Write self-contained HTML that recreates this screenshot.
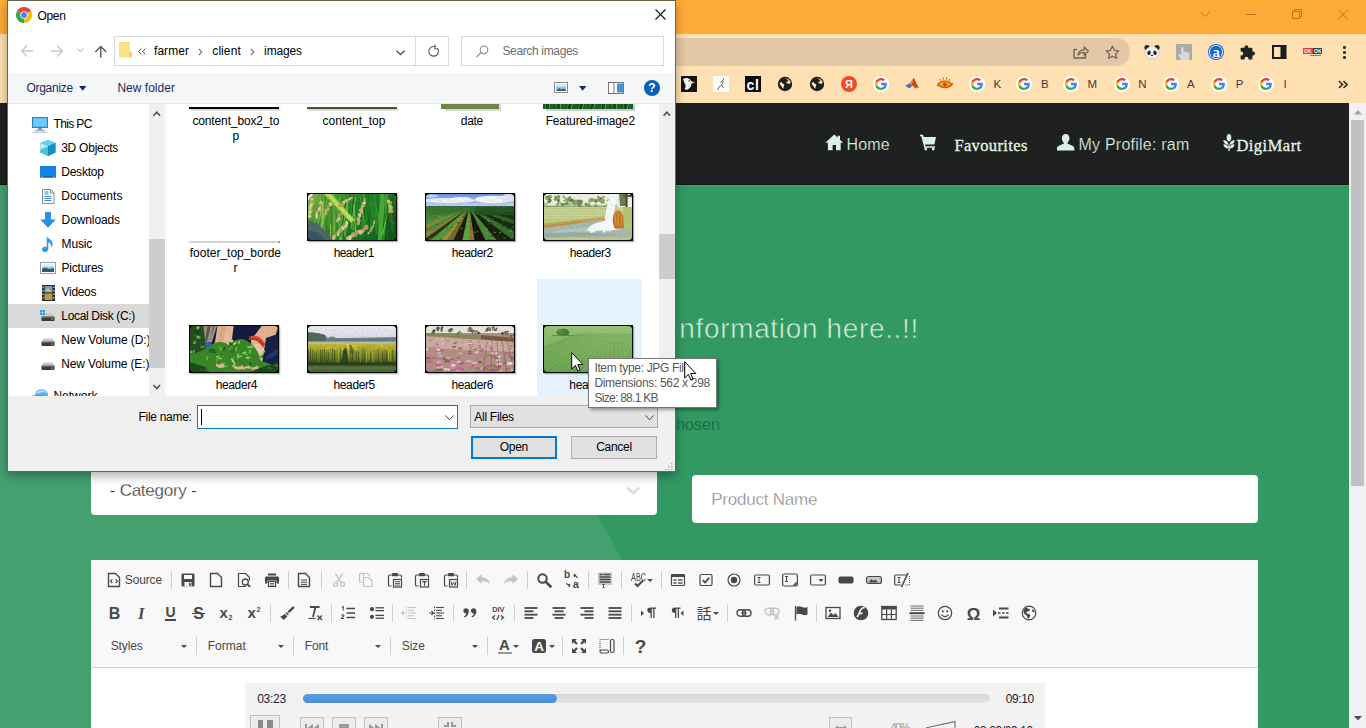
<!DOCTYPE html>
<html><head><meta charset="utf-8"><title>Open</title>
<style>
*{box-sizing:border-box;margin:0;padding:0}
html,body{width:1366px;height:728px;overflow:hidden;background:#329962;font-family:"Liberation Sans",sans-serif}
.abs,.abs *{position:absolute}
#root{position:absolute;left:0;top:0;width:1366px;height:728px;overflow:hidden}
#root div,#root span,#root svg{position:absolute}
.t{white-space:nowrap;line-height:1;}
.seg{font-family:"Liberation Sans",sans-serif;font-size:12px;color:#000}
</style></head><body><div id="root">

<div style="left:0px;top:0px;width:1366px;height:34px;background:#FFAB37;"></div>
<div style="left:0px;top:34px;width:1366px;height:69px;background:#FFE0B2;"></div>
<svg style="left:0px;top:0px;" width="1366" height="34" viewBox="0 0 1366 34"><g fill="none" stroke="#b9741f" stroke-width="1"><path d="M1200 11.5l5 5 5-5"/><path d="M1246 14.500h10"/><path d="M1292.500 11.500h7v7h-7zM1294.500 11.500v-2h7v7h-2"/><path d="M1338 9.500l10 10M1348 9.500l-10 10"/></g></svg>
<div style="left:640px;top:38px;width:490px;height:28px;background:#E4C7A4;border-radius:14px;"></div>
<svg style="left:0px;top:0px;" width="1366" height="103" viewBox="0 0 1366 103"><g fill="none" stroke="#6f6353" stroke-width="1.3" stroke-linejoin="round" stroke-linecap="round"><path d="M1076.500 49.500h-2.500v8.500h11.500v-3.500"/><path d="M1078 55c.5-3.500 3-5.200 6.200-5.200v-2.800l4 4-4 4v-2.700c-2.700 0-4.600.700-6.200 2.700z"/><path d="M1112.500 46.300l1.900 4 4.400.6-3.200 3 .8 4.400-3.900-2.100-3.900 2.100.8-4.400-3.200-3 4.400-.6z"/></g></svg>
<svg style="left:1144px;top:44px;" width="16" height="16" viewBox="0 0 16 16"><circle cx="3" cy="3.500" r="2.600" fill="#222"/><circle cx="13" cy="3.500" r="2.600" fill="#222"/><ellipse cx="8" cy="8.800" rx="7" ry="6.400" fill="#f4f4f4" stroke="#999" stroke-width=".4"/><ellipse cx="5" cy="8.800" rx="1.700" ry="2.200" fill="#222" transform="rotate(20 5 8.800)"/><ellipse cx="11" cy="8.800" rx="1.700" ry="2.200" fill="#222" transform="rotate(-20 11 8.800)"/><ellipse cx="8" cy="11.500" rx="1.100" ry=".8" fill="#222"/></svg>
<svg style="left:1176px;top:44px;" width="16" height="16" viewBox="0 0 16 16"><rect width="16" height="16" fill="#a9aaab"/><path d="M5.500 16.500c-1.500-2.500-2.500-4-3.300-6 .8-1 2-.6 3 .8v-7.300c0-1.600 2.400-1.600 2.400 0v3.700c.7-.5 1.700-.3 2.100.4.700-.4 1.600-.1 1.900.6.900-.3 1.800.3 1.800 1.300v3.500c0 1.200-.4 2-.9 3z" fill="#d8d8d8"/></svg>
<svg style="left:1208px;top:44px;" width="16" height="16" viewBox="0 0 16 16"><circle cx="8" cy="8" r="8" fill="#1a66d6"/><circle cx="8" cy="8" r="6.600" fill="none" stroke="#fff" stroke-width=".9"/></svg>
<span class="t" style="left:1212.70px;top:46.00px;font-size:14px;color:#fff;font-family:'Liberation Serif',serif;font-weight:bold;">a</span>
<svg style="left:1240px;top:43.5px;" width="16" height="16" viewBox="0 0 16 16"><path d="M6.200 1.200c1.200 0 2 .8 2 1.800v.7h3.300c.5 0 .9.400.9.900v3h.7c1.100 0 1.900.8 1.900 1.900s-.8 1.900-1.900 1.900h-.7v3.100c0 .5-.4.900-.9.900h-3.100v-.8c0-1-.8-1.800-1.900-1.800s-1.900.8-1.900 1.800v.8h-3.100c-.5 0-.9-.4-.9-.9v-3.100h.8c1 0 1.800-.8 1.800-1.900s-.8-1.900-1.800-1.900h-.8v-3c0-.5.400-.9.900-.9h3.100v-.7c0-1 .8-1.800 1.600-1.800z" fill="#222"/></svg>
<svg style="left:1272px;top:45px;" width="15" height="14" viewBox="0 0 15 14"><rect x="1" y="1" width="12.500" height="12" fill="none" stroke="#1c1c1c" stroke-width="2"/><rect x="8.500" y="1" width="5" height="12" fill="#1c1c1c"/></svg>
<div style="left:1303px;top:48px;width:10px;height:6px;background:#e53a2b;"></div>
<div style="left:1313px;top:48px;width:9px;height:6px;background:#3b3b3b;"></div>
<span class="t" style="left:1304.00px;top:49.00px;font-size:5px;color:#fff;font-family:'Liberation Sans',sans-serif;font-weight:bold;">OK</span>
<span class="t" style="left:1314.00px;top:49.00px;font-size:5px;color:#fff;font-family:'Liberation Sans',sans-serif;font-weight:bold;">OK</span>
<div style="left:1310px;top:55px;width:11px;height:1px;background:#e0584a;"></div>
<div style="left:1343.2px;top:46.2px;width:2.6px;height:2.6px;background:#2a2a2a;border-radius:50%;"></div>
<div style="left:1343.2px;top:51.2px;width:2.6px;height:2.6px;background:#2a2a2a;border-radius:50%;"></div>
<div style="left:1343.2px;top:56.2px;width:2.6px;height:2.6px;background:#2a2a2a;border-radius:50%;"></div>
<svg style="left:681px;top:76px;" width="16" height="16" viewBox="0 0 16 16"><rect width="16" height="16" fill="#141414"/><path d="M2 3c3-2 7-1 8 2l4 1.500-3.500 1c0 3-2 5.500-5 6.500l-2-1c1.500-2 1.500-4 0-6z" fill="#f3f3f3"/><path d="M10.500 6l3.500 .6-3 1z" fill="#f0a020"/><circle cx="8" cy="5" r=".7" fill="#111"/></svg>
<svg style="left:713px;top:76px;" width="16" height="16" viewBox="0 0 16 16"><rect width="16" height="16" fill="#fbfbfb"/><path d="M10 2c1 1 .5 2-.5 2.500 1 1.500.5 3-1 4.500l2 3M8.500 9l-2.500 2 -1.500 3M9.500 4.500l-2 2.500" fill="none" stroke="#555" stroke-width=".9"/></svg>
<div style="left:745px;top:76px;width:16px;height:16px;background:#0c0c0c;"></div>
<span class="t" style="left:746.50px;top:78.00px;font-size:14px;color:#fff;font-family:'Liberation Sans',sans-serif;font-weight:bold;letter-spacing:0.662px;">cl</span>
<svg style="left:777px;top:76px;" width="16" height="16" viewBox="0 0 16 16"><circle cx="8" cy="8" r="7.2" fill="#1f1f1f"/><path d="M3 6.2c1.2-.2 2 .3 2.6 1.1.5.7 1.6.6 1.8 1.5.2.8-.7 1.3-.8 2.1 0 .6-.4 1.6-1 1.5-.6-.1-.5-1.3-.9-1.9-.5-.7-1.5-.9-1.7-1.8-.2-.8-.3-1.700 0-2.500z" fill="#FFDEB0"/><path d="M8.300 2.2c.9.300 1.100 1.200 2 1.400.8.200 1.200.9.900 1.500-.3.700-1.300.4-1.800 1-.4.500.2 1.200.9 1.300.9.100 1.500.700 2.200.400.600-.3 1-.9 1.200-1.300-.2-2-2.300-4-5.400-4.300z" fill="#FFDEB0"/></svg>
<svg style="left:809px;top:76px;" width="16" height="16" viewBox="0 0 16 16"><circle cx="8" cy="8" r="7.2" fill="#1f1f1f"/><path d="M3 6.2c1.2-.2 2 .3 2.6 1.1.5.7 1.6.6 1.8 1.5.2.8-.7 1.3-.8 2.1 0 .6-.4 1.6-1 1.5-.6-.1-.5-1.3-.9-1.9-.5-.7-1.5-.9-1.7-1.8-.2-.8-.3-1.700 0-2.500z" fill="#FFDEB0"/><path d="M8.300 2.2c.9.300 1.100 1.200 2 1.400.8.200 1.200.9.900 1.500-.3.700-1.300.4-1.800 1-.4.500.2 1.200.9 1.300.9.100 1.500.700 2.200.400.600-.3 1-.9 1.200-1.300-.2-2-2.300-4-5.400-4.300z" fill="#FFDEB0"/></svg>
<div style="left:841px;top:76px;width:16px;height:16px;background:#f04b23;border-radius:50%;"></div>
<span class="t" style="left:845.05px;top:79.00px;font-size:11px;color:#fff;font-family:'Liberation Sans',sans-serif;font-weight:bold;">Я</span>
<svg style="left:873px;top:76px;" width="16" height="16" viewBox="0 0 16 16"><circle cx="8" cy="8" r="8" fill="#fff"/><g transform="translate(8 8) scale(1.27) translate(-8 -8)"><path d="M12.6 8.1c0-.35-.03-.68-.09-1H8v1.9h2.6c-.11.6-.45 1.1-.96 1.45v1.2h1.55c.9-.84 1.42-2.07 1.42-3.55z" fill="#4285F4"/><path d="M8 12.8c1.3 0 2.38-.43 3.18-1.16l-1.55-1.2c-.43.29-.98.46-1.63.46-1.25 0-2.31-.85-2.69-1.98H3.7v1.24C4.5 11.75 6.12 12.8 8 12.8z" fill="#34A853"/><path d="M5.31 8.92A2.9 2.9 0 0 1 5.16 8c0-.32.06-.63.15-.92V5.84H3.7A4.8 4.8 0 0 0 3.2 8c0 .78.19 1.51.51 2.16l1.6-1.24z" fill="#FBBC05"/><path d="M8 5.1c.7 0 1.34.24 1.84.72l1.38-1.38C10.38 3.66 9.3 3.2 8 3.2 6.12 3.2 4.5 4.25 3.7 5.84l1.61 1.24C5.69 5.95 6.75 5.1 8 5.1z" fill="#EA4335"/></g></svg>
<svg style="left:904.5px;top:76px;" width="16" height="16" viewBox="0 0 16 16"><path d="M.3 9.800l4.200-2.600 3 2.600-3.200 2.700z" fill="#3f7ac8"/><path d="M4.500 7.500c2-1.500 3-4.500 4.300-5.800 1.200 1.800 2.200 6.300 5.700 10.300-2-.8-3-.4-4 1-.8-1.800-2.200-3-4-3.700z" fill="#c8461e"/><path d="M8.800 1.700c-1.300 1.300-2.300 4.300-4.300 5.800l2 1.800c1.200-2.200 1.700-5.400 2.300-7.600z" fill="#e88a2a"/></svg>
<svg style="left:936.5px;top:75px;" width="16" height="16" viewBox="0 0 16 16"><path d="M1 9.500c3.500-4.500 10.500-4.500 14 0-3.500 4-10.500 4-14 0z" fill="#f6a623" stroke="#d8580f" stroke-width="1.300"/><circle cx="8" cy="9.500" r="2" fill="#d8400f"/><path d="M1 9.500l-1 2M15 9.500l1-1.500" stroke="#d8580f" stroke-width="1.100"/><path d="M3 4l1.200 1.800M6 2.500l.6 2M10 2.500l-.6 2M13 4l-1.200 1.800" stroke="#d8640f" stroke-width="1.100" fill="none"/></svg>
<svg style="left:969px;top:76px;" width="16" height="16" viewBox="0 0 16 16"><circle cx="8" cy="8" r="8" fill="#fff"/><g transform="translate(8 8) scale(1.27) translate(-8 -8)"><path d="M12.6 8.1c0-.35-.03-.68-.09-1H8v1.9h2.6c-.11.6-.45 1.1-.96 1.45v1.2h1.55c.9-.84 1.42-2.07 1.42-3.55z" fill="#4285F4"/><path d="M8 12.8c1.3 0 2.38-.43 3.18-1.16l-1.55-1.2c-.43.29-.98.46-1.63.46-1.25 0-2.31-.85-2.69-1.98H3.7v1.24C4.5 11.75 6.12 12.8 8 12.8z" fill="#34A853"/><path d="M5.31 8.92A2.9 2.9 0 0 1 5.16 8c0-.32.06-.63.15-.92V5.84H3.7A4.8 4.8 0 0 0 3.2 8c0 .78.19 1.51.51 2.16l1.6-1.24z" fill="#FBBC05"/><path d="M8 5.1c.7 0 1.34.24 1.84.72l1.38-1.38C10.38 3.66 9.3 3.2 8 3.2 6.12 3.2 4.5 4.25 3.7 5.84l1.61 1.24C5.69 5.95 6.75 5.1 8 5.1z" fill="#EA4335"/></g></svg>
<span class="t" style="left:993.60px;top:79.00px;font-size:11.5px;color:#3c3c3c;font-family:'Liberation Sans',sans-serif;">K</span>
<svg style="left:1015.6px;top:76px;" width="16" height="16" viewBox="0 0 16 16"><circle cx="8" cy="8" r="8" fill="#fff"/><g transform="translate(8 8) scale(1.27) translate(-8 -8)"><path d="M12.6 8.1c0-.35-.03-.68-.09-1H8v1.9h2.6c-.11.6-.45 1.1-.96 1.45v1.2h1.55c.9-.84 1.42-2.07 1.42-3.55z" fill="#4285F4"/><path d="M8 12.8c1.3 0 2.38-.43 3.18-1.16l-1.55-1.2c-.43.29-.98.46-1.63.46-1.25 0-2.31-.85-2.69-1.98H3.7v1.24C4.5 11.75 6.12 12.8 8 12.8z" fill="#34A853"/><path d="M5.31 8.92A2.9 2.9 0 0 1 5.16 8c0-.32.06-.63.15-.92V5.84H3.7A4.8 4.8 0 0 0 3.2 8c0 .78.19 1.51.51 2.16l1.6-1.24z" fill="#FBBC05"/><path d="M8 5.1c.7 0 1.34.24 1.84.72l1.38-1.38C10.38 3.66 9.3 3.2 8 3.2 6.12 3.2 4.5 4.25 3.7 5.84l1.61 1.24C5.69 5.95 6.75 5.1 8 5.1z" fill="#EA4335"/></g></svg>
<span class="t" style="left:1041.00px;top:79.00px;font-size:11.5px;color:#3c3c3c;font-family:'Liberation Sans',sans-serif;">B</span>
<svg style="left:1062.7px;top:76px;" width="16" height="16" viewBox="0 0 16 16"><circle cx="8" cy="8" r="8" fill="#fff"/><g transform="translate(8 8) scale(1.27) translate(-8 -8)"><path d="M12.6 8.1c0-.35-.03-.68-.09-1H8v1.9h2.6c-.11.6-.45 1.1-.96 1.45v1.2h1.55c.9-.84 1.42-2.07 1.42-3.55z" fill="#4285F4"/><path d="M8 12.8c1.3 0 2.38-.43 3.18-1.16l-1.55-1.2c-.43.29-.98.46-1.63.46-1.25 0-2.31-.85-2.69-1.98H3.7v1.24C4.5 11.75 6.12 12.8 8 12.8z" fill="#34A853"/><path d="M5.31 8.92A2.9 2.9 0 0 1 5.16 8c0-.32.06-.63.15-.92V5.84H3.7A4.8 4.8 0 0 0 3.2 8c0 .78.19 1.51.51 2.16l1.6-1.24z" fill="#FBBC05"/><path d="M8 5.1c.7 0 1.34.24 1.84.72l1.38-1.38C10.38 3.66 9.3 3.2 8 3.2 6.12 3.2 4.5 4.25 3.7 5.84l1.61 1.24C5.69 5.95 6.75 5.1 8 5.1z" fill="#EA4335"/></g></svg>
<span class="t" style="left:1087.60px;top:79.00px;font-size:11.5px;color:#3c3c3c;font-family:'Liberation Sans',sans-serif;">M</span>
<svg style="left:1113.7px;top:76px;" width="16" height="16" viewBox="0 0 16 16"><circle cx="8" cy="8" r="8" fill="#fff"/><g transform="translate(8 8) scale(1.27) translate(-8 -8)"><path d="M12.6 8.1c0-.35-.03-.68-.09-1H8v1.9h2.6c-.11.6-.45 1.1-.96 1.45v1.2h1.55c.9-.84 1.42-2.07 1.42-3.55z" fill="#4285F4"/><path d="M8 12.8c1.3 0 2.38-.43 3.18-1.16l-1.55-1.2c-.43.29-.98.46-1.63.46-1.25 0-2.31-.85-2.69-1.98H3.7v1.24C4.5 11.75 6.12 12.8 8 12.8z" fill="#34A853"/><path d="M5.31 8.92A2.9 2.9 0 0 1 5.16 8c0-.32.06-.63.15-.92V5.84H3.7A4.8 4.8 0 0 0 3.2 8c0 .78.19 1.51.51 2.16l1.6-1.24z" fill="#FBBC05"/><path d="M8 5.1c.7 0 1.34.24 1.84.72l1.38-1.38C10.38 3.66 9.3 3.2 8 3.2 6.12 3.2 4.5 4.25 3.7 5.84l1.61 1.24C5.69 5.95 6.75 5.1 8 5.1z" fill="#EA4335"/></g></svg>
<span class="t" style="left:1138.30px;top:79.00px;font-size:11.5px;color:#3c3c3c;font-family:'Liberation Sans',sans-serif;">N</span>
<svg style="left:1163px;top:76px;" width="16" height="16" viewBox="0 0 16 16"><circle cx="8" cy="8" r="8" fill="#fff"/><g transform="translate(8 8) scale(1.27) translate(-8 -8)"><path d="M12.6 8.1c0-.35-.03-.68-.09-1H8v1.9h2.6c-.11.6-.45 1.1-.96 1.45v1.2h1.55c.9-.84 1.42-2.07 1.42-3.55z" fill="#4285F4"/><path d="M8 12.8c1.3 0 2.38-.43 3.18-1.16l-1.55-1.2c-.43.29-.98.46-1.63.46-1.25 0-2.31-.85-2.69-1.98H3.7v1.24C4.5 11.75 6.12 12.8 8 12.8z" fill="#34A853"/><path d="M5.31 8.92A2.9 2.9 0 0 1 5.16 8c0-.32.06-.63.15-.92V5.84H3.7A4.8 4.8 0 0 0 3.2 8c0 .78.19 1.51.51 2.16l1.6-1.24z" fill="#FBBC05"/><path d="M8 5.1c.7 0 1.34.24 1.84.72l1.38-1.38C10.38 3.66 9.3 3.2 8 3.2 6.12 3.2 4.5 4.25 3.7 5.84l1.61 1.24C5.69 5.95 6.75 5.1 8 5.1z" fill="#EA4335"/></g></svg>
<span class="t" style="left:1187.00px;top:79.00px;font-size:11.5px;color:#3c3c3c;font-family:'Liberation Sans',sans-serif;">A</span>
<svg style="left:1211px;top:76px;" width="16" height="16" viewBox="0 0 16 16"><circle cx="8" cy="8" r="8" fill="#fff"/><g transform="translate(8 8) scale(1.27) translate(-8 -8)"><path d="M12.6 8.1c0-.35-.03-.68-.09-1H8v1.9h2.6c-.11.6-.45 1.1-.96 1.45v1.2h1.55c.9-.84 1.42-2.07 1.42-3.55z" fill="#4285F4"/><path d="M8 12.8c1.3 0 2.38-.43 3.18-1.16l-1.55-1.2c-.43.29-.98.46-1.63.46-1.25 0-2.31-.85-2.69-1.98H3.7v1.24C4.5 11.75 6.12 12.8 8 12.8z" fill="#34A853"/><path d="M5.31 8.92A2.9 2.9 0 0 1 5.16 8c0-.32.06-.63.15-.92V5.84H3.7A4.8 4.8 0 0 0 3.2 8c0 .78.19 1.51.51 2.16l1.6-1.24z" fill="#FBBC05"/><path d="M8 5.1c.7 0 1.34.24 1.84.72l1.38-1.38C10.38 3.66 9.3 3.2 8 3.2 6.12 3.2 4.5 4.25 3.7 5.84l1.61 1.24C5.69 5.95 6.75 5.1 8 5.1z" fill="#EA4335"/></g></svg>
<span class="t" style="left:1235.80px;top:79.00px;font-size:11.5px;color:#3c3c3c;font-family:'Liberation Sans',sans-serif;">P</span>
<svg style="left:1258px;top:76px;" width="16" height="16" viewBox="0 0 16 16"><circle cx="8" cy="8" r="8" fill="#fff"/><g transform="translate(8 8) scale(1.27) translate(-8 -8)"><path d="M12.6 8.1c0-.35-.03-.68-.09-1H8v1.9h2.6c-.11.6-.45 1.1-.96 1.45v1.2h1.55c.9-.84 1.42-2.07 1.42-3.55z" fill="#4285F4"/><path d="M8 12.8c1.3 0 2.38-.43 3.18-1.16l-1.55-1.2c-.43.29-.98.46-1.63.46-1.25 0-2.31-.85-2.69-1.98H3.7v1.24C4.5 11.75 6.12 12.8 8 12.8z" fill="#34A853"/><path d="M5.31 8.92A2.9 2.9 0 0 1 5.16 8c0-.32.06-.63.15-.92V5.84H3.7A4.8 4.8 0 0 0 3.2 8c0 .78.19 1.51.51 2.16l1.6-1.24z" fill="#FBBC05"/><path d="M8 5.1c.7 0 1.34.24 1.84.72l1.38-1.38C10.38 3.66 9.3 3.2 8 3.2 6.12 3.2 4.5 4.25 3.7 5.84l1.61 1.24C5.69 5.95 6.75 5.1 8 5.1z" fill="#EA4335"/></g></svg>
<span class="t" style="left:1283.60px;top:79.00px;font-size:11.5px;color:#3c3c3c;font-family:'Liberation Sans',sans-serif;">I</span>
<svg style="left:1338px;top:79.5px;" width="10" height="9" viewBox="0 0 10 9"><path d="M1 1l3.500 3.500-3.500 3.500M5.500 1l3.500 3.500-3.500 3.500" fill="none" stroke="#2a2a2a" stroke-width="1.600"/></svg>
<div style="left:0px;top:103px;width:1349px;height:82px;background:#1f2120;"></div>
<div style="left:0px;top:184px;width:1349px;height:1px;background:#06180f;"></div>
<div style="left:0px;top:185px;width:1349px;height:543px;background:#329962;"></div>
<div style="left:0px;top:185px;width:1349px;height:1px;background:rgba(255,255,255,.12);"></div>
<svg style="left:0px;top:185px;" width="1349" height="543" viewBox="0 0 1349 543"><polygon points="0,0 412.4,0 716.5,543 0,543" fill="#45A070"/></svg>
<svg style="left:825px;top:134px;" width="19" height="17" viewBox="0 0 19 17"><path d="M9.300 0.500l-9 8.200h2.600v7.600h4.700v-5.200h3.400v5.200h4.700v-7.600h2.600l-3.300-3v-4h-2.300v1.900z" fill="#d9f2e3"/></svg>
<span class="t" style="left:846.40px;top:137.00px;font-size:16px;color:#d9f2e3;font-family:'Liberation Sans',sans-serif;letter-spacing:0.230px;-webkit-text-stroke:.2px #1f2120;">Home</span>
<svg style="left:920px;top:134px;" width="17" height="17" viewBox="0 0 17 17"><path d="M0 .8h3l.7 2.300h12.300l-1.600 7.300h-9.400l.5 1.800h9.500v1.500h-10.700l-3-11.400h-1.800z" fill="#d9f2e3"/><circle cx="5.800" cy="15" r="1.400" fill="#d9f2e3"/><circle cx="13.200" cy="15" r="1.400" fill="#d9f2e3"/></svg>
<span class="t" style="left:954.40px;top:138.00px;font-size:16.5px;color:#e4f4e6;font-family:'Liberation Serif',serif;letter-spacing:0.364px;-webkit-text-stroke:.3px #e4f4e6;">Favourites</span>
<svg style="left:1057px;top:134px;" width="18" height="17" viewBox="0 0 18 17"><path d="M8.700 0c2.300 0 3.700 1.900 3.700 4.300 0 1.700-.7 3.300-1.800 4.200v1.200c2.500.9 6.400 2.200 6.700 4.300v2.600h-17.300v-2.600c.3-2.100 4.200-3.400 6.700-4.300v-1.200c-1.100-.9-1.800-2.500-1.800-4.200 0-2.400 1.400-4.300 3.800-4.300z" fill="#d9f2e3"/></svg>
<span class="t" style="left:1078.50px;top:137.00px;font-size:16px;color:#d9f2e3;font-family:'Liberation Sans',sans-serif;letter-spacing:0.229px;-webkit-text-stroke:.2px #1f2120;">My Profile: ram</span>
<svg style="left:1222.5px;top:134px;" width="12" height="17" viewBox="0 0 12 17"><g fill="#d9f2e3"><ellipse cx="6" cy="3.600" rx="2.300" ry="3.600"/><path d="M.2 6.300c2.600-.5 5 1.300 5.500 4.500-2.800.2-5-1.500-5.500-4.500z"/><path d="M11.800 6.300c-2.600-.5-5 1.300-5.500 4.500 2.800.2 5-1.500 5.500-4.500z"/><path d="M.4 10.400c2.500-.4 4.700 1 5.300 3.900-2.700.2-4.800-1.200-5.300-3.900z"/><path d="M11.600 10.400c-2.500-.4-4.700 1-5.300 3.900 2.700.2 4.800-1.200 5.300-3.900z"/><rect x="5.300" y="11" width="1.400" height="6"/></g></svg>
<span class="t" style="left:1236.40px;top:138.00px;font-size:16.5px;color:#e4f4e6;font-family:'Liberation Serif',serif;letter-spacing:0.487px;-webkit-text-stroke:.3px #e4f4e6;">DigiMart</span>
<div style="left:677px;top:300px;width:300px;height:60px;overflow:hidden"><span class="t" style="left:0.00px;top:15.00px;font-size:28px;color:#d6efe0;font-family:'Liberation Sans',sans-serif;letter-spacing:0.650px;left:auto;right:58.1px;-webkit-text-stroke:.6px #329962;">Add product information here..!!</span></div>
<span class="t" style="left:600.00px;top:417.00px;font-size:16px;color:#1c5c3c;font-family:'Liberation Sans',sans-serif;left:auto;right:646.2px;-webkit-text-stroke:.35px #329962;">No file chosen</span>
<div style="left:91px;top:462px;width:566px;height:53px;background:#fff;border-radius:4px;"></div>
<span class="t" style="left:109.80px;top:482.00px;font-size:17px;color:#2e2e36;font-family:'Liberation Sans',sans-serif;letter-spacing:-0.262px;-webkit-text-stroke:.3px #fff;">- Category -</span>
<svg style="left:626px;top:486px;" width="15" height="10" viewBox="0 0 15 10"><path d="M1 1.500l6.300 5.500 6.300-5.500" fill="none" stroke="#dcdcdc" stroke-width="2.600"/></svg>
<div style="left:692px;top:475px;width:566px;height:48px;background:#fff;border-radius:4px;"></div>
<span class="t" style="left:711.20px;top:491.00px;font-size:17px;color:#85858d;font-family:'Liberation Sans',sans-serif;letter-spacing:-0.221px;-webkit-text-stroke:.3px #fff;">Product Name</span>
<div style="left:91px;top:560px;width:1167px;height:168px;background:#fff;"></div>
<div style="left:91px;top:560px;width:1167px;height:108px;background:#f8f8f8;border-bottom:1px solid #d1d1d1;"></div>
<svg style="left:105.5px;top:572.0px;" width="16" height="16" viewBox="0 0 16 16"><path d="M2.5 1.5h7l4 4v9h-11z" fill="none" stroke="#484848" stroke-width="1.400" stroke-linejoin="round"/><path d="M6.300 7.200l-1.700 2 1.700 2M9.700 7.200l1.700 2-1.700 2" fill="none" stroke="#484848" stroke-width="1.200"/></svg>
<span class="t" style="left:124.80px;top:574.00px;font-size:12px;color:#484848;font-family:'Liberation Sans',sans-serif;letter-spacing:-0.137px;">Source</span>
<div style="left:171.0px;top:571px;width:1px;height:18px;background:#cfcfcf;"></div>
<div style="left:288.1px;top:571px;width:1px;height:18px;background:#cfcfcf;"></div>
<div style="left:321.0px;top:571px;width:1px;height:18px;background:#cfcfcf;"></div>
<div style="left:465.9px;top:571px;width:1px;height:18px;background:#cfcfcf;"></div>
<div style="left:527.2px;top:571px;width:1px;height:18px;background:#cfcfcf;"></div>
<div style="left:587.8px;top:571px;width:1px;height:18px;background:#cfcfcf;"></div>
<div style="left:621.0px;top:571px;width:1px;height:18px;background:#cfcfcf;"></div>
<div style="left:660.7px;top:571px;width:1px;height:18px;background:#cfcfcf;"></div>
<svg style="left:180.0px;top:572.0px;" width="16" height="16" viewBox="0 0 16 16"><path d="M1.500 3c0-.8.600-1.500 1.500-1.500h10c.8 0 1.500.7 1.500 1.500v10c0 .8-.7 1.500-1.500 1.500h-10c-.9 0-1.500-.7-1.500-1.500z" fill="#484848"/><rect x="4" y="3" width="8" height="4" fill="#f8f8f8"/><rect x="4.500" y="10" width="7" height="4.500" fill="#f8f8f8"/><rect x="9" y="10.800" width="1.700" height="3" fill="#484848"/></svg>
<svg style="left:207.7px;top:572.0px;" width="16" height="16" viewBox="0 0 16 16"><path d="M2.5 1.5h7l4 4v9h-11z" fill="none" stroke="#484848" stroke-width="1.400" stroke-linejoin="round"/></svg>
<svg style="left:235.8px;top:572.0px;" width="16" height="16" viewBox="0 0 16 16"><path d="M10 14.500h-7.500v-13h7l4 4v3" fill="none" stroke="#484848" stroke-width="1.200" stroke-linejoin="round"/><circle cx="9.300" cy="10" r="3" fill="none" stroke="#484848" stroke-width="1.300"/><path d="M11.500 12.300l2.600 2.600" stroke="#484848" stroke-width="1.800"/></svg>
<svg style="left:264.0px;top:572.0px;" width="16" height="16" viewBox="0 0 16 16"><rect x="4" y="1.500" width="8" height="2" fill="#484848"/><path d="M1 6c0-.8.600-1.500 1.500-1.500h11c.8 0 1.500.7 1.500 1.500v5.500h-2.500v-3h-9v3h-2.500z" fill="#484848"/><rect x="4.500" y="9.500" width="7" height="5" fill="none" stroke="#484848" stroke-width="1.200"/><path d="M6 11.500h4M6 13h4" stroke="#484848" stroke-width=".8"/></svg>
<svg style="left:296.4px;top:572.0px;" width="16" height="16" viewBox="0 0 16 16"><path d="M2.5 1.5h7l4 4v9h-11z" fill="none" stroke="#484848" stroke-width="1.400" stroke-linejoin="round"/><path d="M5 8h6" stroke="#484848" stroke-width="1"/><path d="M5 10.2h6" stroke="#484848" stroke-width="1"/><path d="M5 12.4h6" stroke="#484848" stroke-width="1"/></svg>
<svg style="left:331.0px;top:572.0px;" width="16" height="16" viewBox="0 0 16 16"><path d="M4.500 1.500l5.800 9M11.500 1.500l-5.800 9" stroke="#c4c4c4" stroke-width="1.500" fill="none"/><circle cx="4.500" cy="12.300" r="2" fill="none" stroke="#c4c4c4" stroke-width="1.300"/><circle cx="11.500" cy="12.300" r="2" fill="none" stroke="#c4c4c4" stroke-width="1.300"/></svg>
<svg style="left:357.5px;top:572.0px;" width="16" height="16" viewBox="0 0 16 16"><path d="M5.500 4.500v-3h4l2.500 2.500" fill="none" stroke="#c4c4c4" stroke-width="1.200"/><path d="M1.500 1.500h4" stroke="#c4c4c4" stroke-width="1.200"/><path d="M1.500 1.500v8.500h3" fill="none" stroke="#c4c4c4" stroke-width="1.200"/><path d="M5.500 5.500h5l3.500 3.500v5.500h-8.500z" fill="none" stroke="#c4c4c4" stroke-width="1.200" stroke-linejoin="round"/></svg>
<svg style="left:386.5px;top:572.0px;" width="16" height="16" viewBox="0 0 16 16"><path d="M5 3h-2.200c-.7 0-1.300.6-1.300 1.300v8.400c0 .7.600 1.300 1.300 1.300h1.700" fill="none" stroke="#484848" stroke-width="1.200"/><path d="M11 3h2.200c.7 0 1.300.6 1.300 1.300v2.200" fill="none" stroke="#484848" stroke-width="1.200"/><path d="M5 4.200v-2c0-.7.500-1.200 1.200-1.200h3.600c.7 0 1.200.5 1.200 1.200v2z" fill="#484848"/><rect x="6.500" y="7.500" width="8" height="7.500" fill="none" stroke="#484848" stroke-width="1.200"/><path d="M8 9.7h5" stroke="#484848" stroke-width="0.9"/><path d="M8 11.4h5" stroke="#484848" stroke-width="0.9"/><path d="M8 13.1h5" stroke="#484848" stroke-width="0.9"/></svg>
<svg style="left:414.4px;top:572.0px;" width="16" height="16" viewBox="0 0 16 16"><path d="M5 3h-2.200c-.7 0-1.300.6-1.300 1.300v8.400c0 .7.600 1.300 1.300 1.300h1.700" fill="none" stroke="#484848" stroke-width="1.200"/><path d="M11 3h2.200c.7 0 1.300.6 1.300 1.300v2.200" fill="none" stroke="#484848" stroke-width="1.200"/><path d="M5 4.200v-2c0-.7.500-1.200 1.200-1.200h3.600c.7 0 1.200.5 1.200 1.200v2z" fill="#484848"/><rect x="6.500" y="7.500" width="8" height="7.500" fill="none" stroke="#484848" stroke-width="1.200"/><path d="M8.300 9.700h4.400M10.500 9.700v4" stroke="#484848" stroke-width="1.200" fill="none"/></svg>
<svg style="left:442.5px;top:572.0px;" width="16" height="16" viewBox="0 0 16 16"><path d="M5 3h-2.200c-.7 0-1.300.6-1.300 1.300v8.400c0 .7.600 1.300 1.300 1.300h1.700" fill="none" stroke="#484848" stroke-width="1.200"/><path d="M11 3h2.200c.7 0 1.300.6 1.300 1.300v2.200" fill="none" stroke="#484848" stroke-width="1.200"/><path d="M5 4.200v-2c0-.7.500-1.200 1.200-1.200h3.600c.7 0 1.200.5 1.200 1.200v2z" fill="#484848"/><rect x="6.500" y="7.500" width="8" height="7.500" fill="none" stroke="#484848" stroke-width="1.200"/><path d="M8 9.500l.9 3.800 1.600-3 1.600 3 .9-3.800" stroke="#484848" stroke-width="1" fill="none"/></svg>
<svg style="left:475.2px;top:572.0px;" width="16" height="16" viewBox="0 0 16 16"><path d="M1 7l5.500-4.500v2.800c4.500 0 7.500 2.200 8.500 6.700-2-2.300-4.500-3-8.500-2.800v2.800z" fill="#c4c4c4"/></svg>
<svg style="left:502.8px;top:572.0px;" width="16" height="16" viewBox="0 0 16 16"><path d="M15 7l-5.500-4.500v2.800c-4.500 0-7.500 2.200-8.500 6.700 2-2.300 4.500-3 8.500-2.800v2.800z" fill="#c4c4c4"/></svg>
<svg style="left:536.2px;top:572.0px;" width="16" height="16" viewBox="0 0 16 16"><circle cx="6.500" cy="6.500" r="4.200" fill="none" stroke="#484848" stroke-width="2"/><path d="M9.800 9.800l4.700 4.700" stroke="#484848" stroke-width="2.600" stroke-linecap="round"/></svg>
<svg style="left:563.8px;top:572.0px;" width="16" height="16" viewBox="0 0 16 16"><path d="M9.500 3.500c2 0 3.500.5 4 2.500M12 3.500l-2.200 1.300M12 3.500l-2.200-1.300" fill="none" stroke="#484848" stroke-width="1.100"/><path d="M2.500 11c.3 1.800 1.800 2.300 3.800 2.300M4.200 13.300l1.800-1.300M4.200 13.300l1.800 1.300" fill="none" stroke="#484848" stroke-width="1.100"/></svg>
<svg style="left:596.5px;top:572.0px;" width="16" height="16" viewBox="0 0 16 16"><rect x="1" y=".5" width="14" height="12.500" fill="#c9c9c9"/><path d="M2.5 2.5h3.0" stroke="#484848" stroke-width="1.5"/><path d="M6.5 2.5h7.0" stroke="#484848" stroke-width="1.5"/><path d="M2.5 5h11.0" stroke="#484848" stroke-width="1.5"/><path d="M2.5 7.5h11.0" stroke="#484848" stroke-width="1.5"/><path d="M2.5 10h11.0" stroke="#484848" stroke-width="1.5"/><path d="M6.500 12.500v3M5.300 12.500h2.400M5.300 15.500h2.400" stroke="#484848" stroke-width=".9"/></svg>
<svg style="left:670.3px;top:572.0px;" width="16" height="16" viewBox="0 0 16 16"><rect x="1.500" y="2.500" width="13" height="11" rx="1" fill="none" stroke="#484848" stroke-width="1.200"/><rect x="1.500" y="2.500" width="13" height="2.500" fill="#484848"/><path d="M3.5 8h3.0" stroke="#484848" stroke-width="1.4"/><path d="M8 8h4.5" stroke="#484848" stroke-width="1.4"/><path d="M3.5 11h3.0" stroke="#484848" stroke-width="1.4"/><path d="M8 11h4.5" stroke="#484848" stroke-width="1.4"/></svg>
<svg style="left:698.0px;top:572.0px;" width="16" height="16" viewBox="0 0 16 16"><rect x="2" y="2.500" width="12" height="11" rx="1.500" fill="none" stroke="#484848" stroke-width="1.200"/><path d="M4.800 8.200l2.200 2.300 4.300-4.800" fill="none" stroke="#484848" stroke-width="1.800"/></svg>
<svg style="left:726.0px;top:572.0px;" width="16" height="16" viewBox="0 0 16 16"><circle cx="8" cy="8" r="6" fill="none" stroke="#484848" stroke-width="1.200"/><circle cx="8" cy="8" r="3.200" fill="#484848"/></svg>
<svg style="left:754.0px;top:572.0px;" width="16" height="16" viewBox="0 0 16 16"><rect x=".6" y="3" width="14.800" height="10" rx="1.500" fill="none" stroke="#484848" stroke-width="1.200"/><path d="M3.500 5.500h3M5 5.500v5M3.500 10.500h3" stroke="#484848" stroke-width="1" fill="none"/></svg>
<svg style="left:782.0px;top:572.0px;" width="16" height="16" viewBox="0 0 16 16"><rect x=".6" y="2" width="14.800" height="12" rx="1.500" fill="none" stroke="#484848" stroke-width="1.200"/><path d="M3 4.500h3M4.500 4.500v5M3 9.500h3" stroke="#484848" stroke-width="1" fill="none"/><path d="M14.500 9.500l-4 4h4z" fill="#484848"/></svg>
<svg style="left:810.0px;top:572.0px;" width="16" height="16" viewBox="0 0 16 16"><rect x=".6" y="3" width="14.800" height="10" rx="1.500" fill="none" stroke="#484848" stroke-width="1.200"/><path d="M8.500 7l2.500 3 2.500-3z" fill="#484848"/></svg>
<svg style="left:838.0px;top:572.0px;" width="16" height="16" viewBox="0 0 16 16"><rect x=".5" y="4.500" width="15" height="7" rx="1.800" fill="#484848"/></svg>
<svg style="left:865.8px;top:572.0px;" width="16" height="16" viewBox="0 0 16 16"><rect x=".6" y="4.500" width="14.800" height="7" rx="2" fill="#c8c8c8" stroke="#484848" stroke-width="1.200"/><path d="M2.500 10.500l3-3.500 2 2 1.500-1.500 3.500 3z" fill="#484848"/></svg>
<svg style="left:894.0px;top:572.0px;" width="16" height="16" viewBox="0 0 16 16"><path d="M13 3h-11c-.8 0-1.300.6-1.300 1.300v7.400c0 .7.500 1.300 1.300 1.300h5" fill="none" stroke="#484848" stroke-width="1.200"/><path d="M3.500 5.500h3M5 5.500v5M3.500 10.500h3" stroke="#484848" stroke-width="1" fill="none"/><path d="M14 1l-6.500 14" stroke="#484848" stroke-width="1.600"/><path d="M15.400 4v9h-5" fill="none" stroke="#484848" stroke-width="1" stroke-dasharray="1 1"/></svg>
<span class="t" style="left:564.00px;top:570.00px;font-size:10px;color:#484848;font-family:'Liberation Sans',sans-serif;font-weight:bold;">b</span>
<span class="t" style="left:572.80px;top:579.00px;font-size:11px;color:#484848;font-family:'Liberation Sans',sans-serif;font-weight:bold;">a</span>
<span class="t" style="left:630.80px;top:573.00px;font-size:10px;color:#484848;font-family:'Liberation Sans',sans-serif;transform:scaleX(.74);transform-origin:0 0;">ABC</span>
<svg style="left:630px;top:572px;" width="16" height="16" viewBox="0 0 16 16"><path d="M5 11.500l2.500 2.500 5.500-5.500" fill="none" stroke="#484848" stroke-width="2"/></svg>
<svg style="left:647.3px;top:579px;" width="6" height="3" viewBox="0 0 6 3"><path d="M0 0h6l-3 3z" fill="#484848"/></svg>
<div style="left:270.0px;top:604px;width:1px;height:18px;background:#cfcfcf;"></div>
<div style="left:330.9px;top:604px;width:1px;height:18px;background:#cfcfcf;"></div>
<div style="left:392.1px;top:604px;width:1px;height:18px;background:#cfcfcf;"></div>
<div style="left:453.1px;top:604px;width:1px;height:18px;background:#cfcfcf;"></div>
<div style="left:514.1px;top:604px;width:1px;height:18px;background:#cfcfcf;"></div>
<div style="left:630.9px;top:604px;width:1px;height:18px;background:#cfcfcf;"></div>
<div style="left:727.0px;top:604px;width:1px;height:18px;background:#cfcfcf;"></div>
<div style="left:816.0px;top:604px;width:1px;height:18px;background:#cfcfcf;"></div>
<span class="t" style="left:108.72px;top:606.00px;font-size:16px;color:#484848;font-family:'Liberation Sans',sans-serif;font-weight:bold;">B</span>
<span class="t" style="left:137.99px;top:606.00px;font-size:16.5px;color:#484848;font-family:'Liberation Serif',serif;font-weight:bold;font-style:italic;">I</span>
<span class="t" style="left:165.44px;top:605.00px;font-size:14px;color:#484848;font-family:'Liberation Sans',sans-serif;font-weight:bold;">U</span>
<div style="left:165px;top:619.3px;width:11px;height:1.3px;background:#484848;"></div>
<span class="t" style="left:193.16px;top:606.00px;font-size:16px;color:#484848;font-family:'Liberation Sans',sans-serif;font-weight:bold;">S</span>
<div style="left:192px;top:612.5px;width:13px;height:1.5px;background:#484848;"></div>
<span class="t" style="left:219.50px;top:605.00px;font-size:15px;color:#484848;font-family:'Liberation Sans',sans-serif;font-weight:bold;">x</span>
<span class="t" style="left:228.50px;top:614.00px;font-size:7px;color:#484848;font-family:'Liberation Sans',sans-serif;font-weight:bold;">2</span>
<span class="t" style="left:247.50px;top:605.00px;font-size:15px;color:#484848;font-family:'Liberation Sans',sans-serif;font-weight:bold;">x</span>
<span class="t" style="left:256.50px;top:606.00px;font-size:7px;color:#484848;font-family:'Liberation Sans',sans-serif;font-weight:bold;">2</span>
<svg style="left:278.7px;top:605.0px;" width="16" height="16" viewBox="0 0 16 16"><path d="M15 1.800c.5.500.5 1.200 0 1.700l-4.700 4.600-1.700-1.700 4.700-4.600c.500-.5 1.200-.5 1.700 0z" fill="#484848"/><path d="M7.700 7l2.300 2.300-1.200 1.100-2.200-2.300z" fill="#484848"/><path d="M5.800 8.800l2.600 2.600-3.700 3.600-3.700-3.500c1.800-.2 3.400-1.200 4.800-2.700z" fill="#484848"/></svg>
<svg style="left:307.0px;top:605.0px;" width="16" height="16" viewBox="0 0 16 16"><path d="M3 2h9.500M8.500 2l-2.500 10" stroke="#484848" stroke-width="1.800" fill="none"/><path d="M1.500 13.500h7" stroke="#484848" stroke-width="1.200"/><path d="M10.500 10.500l4.500 4.500M15 10.500l-4.500 4.500" stroke="#484848" stroke-width="1.400"/></svg>
<svg style="left:340.2px;top:605.0px;" width="16" height="16" viewBox="0 0 16 16"><path d="M6.5 3.5h8.5" stroke="#484848" stroke-width="1.5"/><path d="M6.5 8h8.5" stroke="#484848" stroke-width="1.5"/><path d="M6.5 12.5h8.5" stroke="#484848" stroke-width="1.5"/><path d="M2 2.500l1.200-.8v3.800" fill="none" stroke="#484848" stroke-width="1.100"/><path d="M1.500 10.500c.2-1 2.400-1 2.300.200 0 .9-2.300 1.600-2.300 2.800h2.500" fill="none" stroke="#484848" stroke-width="1.100"/></svg>
<svg style="left:368.5px;top:605.0px;" width="16" height="16" viewBox="0 0 16 16"><circle cx="3" cy="4.200" r="2.100" fill="#484848"/><circle cx="3" cy="11.800" r="2.100" fill="#484848"/><path d="M6.5 2.8h8.5" stroke="#484848" stroke-width="1.3"/><path d="M6.5 5.6h8.5" stroke="#484848" stroke-width="1.3"/><path d="M6.5 10.4h8.5" stroke="#484848" stroke-width="1.3"/><path d="M6.5 13.2h8.5" stroke="#484848" stroke-width="1.3"/></svg>
<svg style="left:401.2px;top:605.0px;" width="16" height="16" viewBox="0 0 16 16"><path d="M7 2.5h8" stroke="#c4c4c4" stroke-width="1.1"/><path d="M7 5.3h6" stroke="#c4c4c4" stroke-width="1.1"/><path d="M7 8h8" stroke="#c4c4c4" stroke-width="1.1"/><path d="M7 10.8h6" stroke="#c4c4c4" stroke-width="1.1"/><path d="M7 13.5h8" stroke="#c4c4c4" stroke-width="1.1"/><path d="M5.500 1.500v13" stroke="#c4c4c4" stroke-width="1" stroke-dasharray="1.500 1.500"/><path d="M5 8h-4.500M2.500 6l-2 2 2 2" fill="none" stroke="#c4c4c4" stroke-width="1.100"/></svg>
<svg style="left:429.0px;top:605.0px;" width="16" height="16" viewBox="0 0 16 16"><path d="M7 2.5h8" stroke="#484848" stroke-width="1.1"/><path d="M7 5.3h6" stroke="#484848" stroke-width="1.1"/><path d="M7 8h8" stroke="#484848" stroke-width="1.1"/><path d="M7 10.8h6" stroke="#484848" stroke-width="1.1"/><path d="M7 13.5h8" stroke="#484848" stroke-width="1.1"/><path d="M5.500 1.500v13" stroke="#484848" stroke-width="1" stroke-dasharray="1.500 1.500"/><path d="M0 8h4.500M2.500 6l2 2-2 2" fill="none" stroke="#484848" stroke-width="1.100"/></svg>
<svg style="left:462.0px;top:605.0px;" width="16" height="16" viewBox="0 0 16 16"><path d="M1.300 5.800c0-1.500 1.200-2.600 2.700-2.600s2.800 1.200 2.800 3.100c0 2.700-1.700 5.200-4.400 6.300l-.6-1c1.300-.8 2.200-1.900 2.500-3.200-1.700.2-3-1-3-2.600zM8.900 5.800c0-1.500 1.200-2.600 2.700-2.600s2.800 1.200 2.800 3.100c0 2.700-1.700 5.200-4.400 6.300l-.6-1c1.300-.8 2.200-1.900 2.500-3.200-1.700.2-3-1-3-2.600z" fill="#484848"/></svg>
<svg style="left:490.2px;top:605.0px;" width="16" height="16" viewBox="0 0 16 16"><path d="M5 10.500l-2.500 2 2.500 2M11 10.500l2.500 2-2.500 2M9.200 10l-2.400 5" fill="none" stroke="#484848" stroke-width="1.300"/></svg>
<svg style="left:522.8px;top:605.0px;" width="16" height="16" viewBox="0 0 16 16"><path d="M1.5 3h13.0" stroke="#484848" stroke-width="1.8"/><path d="M1.5 6.3h9.0" stroke="#484848" stroke-width="1.8"/><path d="M1.5 9.7h13.0" stroke="#484848" stroke-width="1.8"/><path d="M1.5 13h9.0" stroke="#484848" stroke-width="1.8"/></svg>
<svg style="left:551.0px;top:605.0px;" width="16" height="16" viewBox="0 0 16 16"><path d="M1.5 3h13.0" stroke="#484848" stroke-width="1.8"/><path d="M3.5 6.3h9.0" stroke="#484848" stroke-width="1.8"/><path d="M1.5 9.7h13.0" stroke="#484848" stroke-width="1.8"/><path d="M3.5 13h9.0" stroke="#484848" stroke-width="1.8"/></svg>
<svg style="left:579.1px;top:605.0px;" width="16" height="16" viewBox="0 0 16 16"><path d="M1.5 3h13.0" stroke="#484848" stroke-width="1.8"/><path d="M5.5 6.3h9.0" stroke="#484848" stroke-width="1.8"/><path d="M1.5 9.7h13.0" stroke="#484848" stroke-width="1.8"/><path d="M5.5 13h9.0" stroke="#484848" stroke-width="1.8"/></svg>
<svg style="left:607.0px;top:605.0px;" width="16" height="16" viewBox="0 0 16 16"><path d="M1.5 3h13.0" stroke="#484848" stroke-width="1.8"/><path d="M1.5 6.3h13.0" stroke="#484848" stroke-width="1.8"/><path d="M1.5 9.7h13.0" stroke="#484848" stroke-width="1.8"/><path d="M1.5 13h13.0" stroke="#484848" stroke-width="1.8"/></svg>
<svg style="left:639.8px;top:605.0px;" width="16" height="16" viewBox="0 0 16 16"><path d="M9 2.500h7v1.300h-1.500v9.200h-1.300v-9.200h-1.400v9.200h-1.300v-5c-2 0-3.200-1.200-3.200-2.800s1.200-2.700 3.200-2.700z" fill="#484848"/><path d="M1 5.500l3 2.800-3 2.800z" fill="#484848"/></svg>
<svg style="left:668.0px;top:605.0px;" width="16" height="16" viewBox="0 0 16 16"><path d="M5.5 2.500h7v1.300h-1.500v9.200h-1.300v-9.200h-1.400v9.200h-1.300v-5c-2 0-3.200-1.200-3.200-2.800s1.200-2.700 3.200-2.700z" fill="#484848"/><path d="M15.500 5.500l-3 2.800 3 2.800z" fill="#484848"/></svg>
<svg style="left:735.9px;top:605.0px;" width="16" height="16" viewBox="0 0 16 16"><rect x="1" y="4.800" width="8.500" height="6.400" rx="3.200" fill="none" stroke="#484848" stroke-width="1.400"/><rect x="6.500" y="4.800" width="8.500" height="6.400" rx="3.200" fill="none" stroke="#484848" stroke-width="1.400"/><path d="M5.500 8h5" stroke="#484848" stroke-width="1.300"/></svg>
<svg style="left:764.3px;top:605.0px;" width="16" height="16" viewBox="0 0 16 16"><g transform="translate(0,-1.500)"><rect x="1" y="4.800" width="8.500" height="6.400" rx="3.200" fill="none" stroke="#c4c4c4" stroke-width="1.400"/><rect x="6.500" y="4.800" width="8.500" height="6.400" rx="3.200" fill="none" stroke="#c4c4c4" stroke-width="1.400"/><path d="M5.500 8h5" stroke="#c4c4c4" stroke-width="1.300"/></g><path d="M10.500 10.500l4 4M14.500 10.500l-4 4" stroke="#c4c4c4" stroke-width="1.400"/></svg>
<svg style="left:792.5px;top:605.0px;" width="16" height="16" viewBox="0 0 16 16"><path d="M2.500 1v14.500" stroke="#484848" stroke-width="1.300"/><path d="M3.500 2c2-1.200 3.500-.8 5.500 0s3.500 1 5.500 0v7.500c-2 1-3.500.8-5.500 0s-3.500-1.200-5.500 0z" fill="#484848"/></svg>
<svg style="left:825.0px;top:605.0px;" width="16" height="16" viewBox="0 0 16 16"><rect x="1" y="2.500" width="14" height="11" fill="none" stroke="#484848" stroke-width="1.300"/><path d="M2.500 12l3.500-4.500 2.500 2.500 2-2 3 4z" fill="#484848"/><circle cx="5" cy="5.800" r="1.200" fill="#484848"/></svg>
<svg style="left:853.2px;top:605.0px;" width="16" height="16" viewBox="0 0 16 16"><circle cx="8" cy="8" r="7.300" fill="#484848"/><path d="M11.800 3.200c-3 .2-3.800 2.300-4.500 4.300h2.200v1.800h-2.800c-.7 1.800-1.500 3-3 3.300v-1.800c1-.4 1.300-1.600 1.900-3.200.9-2.600 2.200-5.800 6.200-6.200z" fill="#f8f8f8"/></svg>
<svg style="left:881.1px;top:605.0px;" width="16" height="16" viewBox="0 0 16 16"><rect x=".8" y="1.500" width="14.400" height="13" fill="none" stroke="#484848" stroke-width="1.300"/><rect x=".8" y="1.500" width="14.400" height="3" fill="#484848"/><path d="M5.600 4.500v10M10.400 4.500v10M.8 9.500h14.400" stroke="#484848" stroke-width="1.200"/></svg>
<svg style="left:909.0px;top:605.0px;" width="16" height="16" viewBox="0 0 16 16"><path d="M1.5 1h13.0" stroke="#484848" stroke-width="0.8"/><path d="M1.5 3.2h13.0" stroke="#484848" stroke-width="0.8"/><path d="M1.5 5.4h13.0" stroke="#484848" stroke-width="0.8"/><path d="M1.5 11h13.0" stroke="#484848" stroke-width="0.8"/><path d="M1.5 13.2h13.0" stroke="#484848" stroke-width="0.8"/><path d="M1.5 15.4h13.0" stroke="#484848" stroke-width="0.8"/><path d="M0.5 8.2h15.0" stroke="#484848" stroke-width="2"/></svg>
<svg style="left:937.0px;top:605.0px;" width="16" height="16" viewBox="0 0 16 16"><circle cx="8" cy="8" r="6.700" fill="none" stroke="#484848" stroke-width="1.200"/><circle cx="5.700" cy="6.300" r="1.100" fill="#484848"/><circle cx="10.300" cy="6.300" r="1.100" fill="#484848"/><path d="M4.300 9.500c1.800 2.700 5.600 2.700 7.400 0" fill="none" stroke="#484848" stroke-width="1.200"/></svg>
<svg style="left:993.3px;top:605.0px;" width="16" height="16" viewBox="0 0 16 16"><path d="M0 4.500l4 3.500-4 3.500z" fill="#484848"/><path d="M6 3.5h9.5" stroke="#484848" stroke-width="2"/><path d="M6 12.5h9.5" stroke="#484848" stroke-width="2"/><path d="M5 8h11" stroke="#484848" stroke-width="1.600" stroke-dasharray="2.500 1.500"/></svg>
<svg style="left:1021.0px;top:605.0px;" width="16" height="16" viewBox="0 0 16 16"><circle cx="8" cy="8" r="6.800" fill="none" stroke="#484848" stroke-width="1.200"/><path d="M5 2.500c1.500.3 1.500 1.300 3 1.500 1 .2 1.500 1 .5 1.800-1 .7-2.500.4-3 1.500-.4.800.5 1.500 1.500 1.500 1.200 0 2.500.7 2.200 2-.3 1-1 1.500-1.200 3-2-.2-1.500-2-2.500-3.200-1-1.100-2.500-1.500-3-3-.4-1.500.5-4 2.500-5.100zM11 4.500c1 0 2.500 1 3 2.500-1 .5-2.500 0-3-1z" fill="#484848"/></svg>
<span class="t" style="left:492.30px;top:606.00px;font-size:7.5px;color:#484848;font-family:'Liberation Sans',sans-serif;font-weight:bold;letter-spacing:-0.167px;">DIV</span>
<span class="t" style="left:696.40px;top:606.00px;font-size:15px;color:#484848;font-family:'Liberation Sans',sans-serif;font-family:'Liberation Sans','Noto Sans CJK JP',sans-serif;">話</span>
<svg style="left:713.3px;top:612px;" width="6" height="3" viewBox="0 0 6 3"><path d="M0 0h6l-3 3z" fill="#484848"/></svg>
<span class="t" style="left:966.68px;top:606.00px;font-size:17px;color:#484848;font-family:'Liberation Sans',sans-serif;font-weight:bold;">Ω</span>
<div style="left:195.8px;top:637px;width:1px;height:18px;background:#cfcfcf;"></div>
<div style="left:293.0px;top:637px;width:1px;height:18px;background:#cfcfcf;"></div>
<div style="left:389.8px;top:637px;width:1px;height:18px;background:#cfcfcf;"></div>
<div style="left:487.0px;top:637px;width:1px;height:18px;background:#cfcfcf;"></div>
<div style="left:562.2px;top:637px;width:1px;height:18px;background:#cfcfcf;"></div>
<div style="left:623.0px;top:637px;width:1px;height:18px;background:#cfcfcf;"></div>
<span class="t" style="left:110.70px;top:640.00px;font-size:12px;color:#484848;font-family:'Liberation Sans',sans-serif;letter-spacing:-0.113px;">Styles</span>
<svg style="left:181.4px;top:645px;" width="6" height="3" viewBox="0 0 6 3"><path d="M0 0h6l-3 3z" fill="#484848"/></svg>
<span class="t" style="left:207.70px;top:640.00px;font-size:12px;color:#484848;font-family:'Liberation Sans',sans-serif;letter-spacing:0.033px;">Format</span>
<svg style="left:278.4px;top:645px;" width="6" height="3" viewBox="0 0 6 3"><path d="M0 0h6l-3 3z" fill="#484848"/></svg>
<span class="t" style="left:304.80px;top:640.00px;font-size:12px;color:#484848;font-family:'Liberation Sans',sans-serif;letter-spacing:-0.128px;">Font</span>
<svg style="left:375.4px;top:645px;" width="6" height="3" viewBox="0 0 6 3"><path d="M0 0h6l-3 3z" fill="#484848"/></svg>
<span class="t" style="left:401.70px;top:640.00px;font-size:12px;color:#484848;font-family:'Liberation Sans',sans-serif;letter-spacing:-0.011px;">Size</span>
<svg style="left:472px;top:645px;" width="6" height="3" viewBox="0 0 6 3"><path d="M0 0h6l-3 3z" fill="#484848"/></svg>
<span class="t" style="left:499.08px;top:637.00px;font-size:15px;color:#484848;font-family:'Liberation Sans',sans-serif;font-weight:bold;">A</span>
<div style="left:497.5px;top:652.3px;width:14px;height:1.5px;background:#9a9a9a;"></div>
<svg style="left:513.3px;top:645px;" width="6" height="3" viewBox="0 0 6 3"><path d="M0 0h6l-3 3z" fill="#484848"/></svg>
<div style="left:532.3px;top:639px;width:13.5px;height:14px;background:#484848;border-radius:2.500px;"></div>
<span class="t" style="left:534.13px;top:640.00px;font-size:13.5px;color:#f8f8f8;font-family:'Liberation Sans',sans-serif;font-weight:bold;">A</span>
<svg style="left:549px;top:645px;" width="6" height="3" viewBox="0 0 6 3"><path d="M0 0h6l-3 3z" fill="#484848"/></svg>
<svg style="left:571.2px;top:638.0px;" width="16" height="16" viewBox="0 0 16 16"><path d="M1 1h5l-1.700 1.700 2.500 2.500-1.600 1.600-2.500-2.500-1.700 1.700zM15 1v5l-1.700-1.700-2.500 2.500-1.600-1.600 2.500-2.500-1.700-1.700zM1 15v-5l1.700 1.700 2.500-2.500 1.600 1.600-2.500 2.500 1.700 1.700zM15 15h-5l1.700-1.700-2.500-2.500 1.600-1.600 2.500 2.500 1.700-1.700z" fill="#484848"/></svg>
<svg style="left:598.9px;top:638.0px;" width="16" height="16" viewBox="0 0 16 16"><path d="M1 12v-10.500h9.500" fill="none" stroke="#484848" stroke-width="1" stroke-dasharray="1 1"/><rect x="11.500" y="1.500" width="3.500" height="13" rx="1.500" fill="none" stroke="#484848" stroke-width="1.200"/><rect x="1" y="12" width="8.500" height="3" rx="1.500" fill="none" stroke="#484848" stroke-width="1.200"/></svg>
<span class="t" style="left:634.70px;top:637.00px;font-size:19px;color:#484848;font-family:'Liberation Sans',sans-serif;font-weight:bold;">?</span>
<div style="left:245px;top:683px;width:800px;height:45px;background:#f2f2f2;"></div>
<span class="t" style="left:257.20px;top:693.00px;font-size:12px;color:#1c1c2c;font-family:'Liberation Sans',sans-serif;letter-spacing:-0.266px;">03:23</span>
<div style="left:302.5px;top:693.5px;width:687.5px;height:9px;background:linear-gradient(#d6d6d6,#e6e6e6);border-radius:4.500px;"></div>
<div style="left:302.5px;top:693.5px;width:254px;height:9px;background:linear-gradient(#5a9ee0,#4a8fd6);border-radius:4.500px;"></div>
<span class="t" style="left:1005.80px;top:693.00px;font-size:12px;color:#1c1c2c;font-family:'Liberation Sans',sans-serif;letter-spacing:-0.406px;">09:10</span>
<div style="left:250px;top:714.5px;width:30px;height:20px;background:#ececec;border:1px solid #c0c0c0;"></div>
<div style="left:257.8px;top:720.3px;width:5.4px;height:10px;background:#8a8a8a;"></div>
<div style="left:267.3px;top:720.3px;width:5.7px;height:10px;background:#8a8a8a;"></div>
<div style="left:300px;top:717px;width:24px;height:20px;background:#ececec;border:1px solid #c0c0c0;"></div>
<div style="left:332px;top:717px;width:24px;height:20px;background:#ececec;border:1px solid #c0c0c0;"></div>
<div style="left:364px;top:717px;width:24px;height:20px;background:#ececec;border:1px solid #c0c0c0;"></div>
<div style="left:438.3px;top:717px;width:24px;height:20px;background:#ececec;border:1px solid #c0c0c0;"></div>
<svg style="left:305px;top:724px;" width="14" height="8" viewBox="0 0 14 8"><path d="M0 0h2v8h-2zM8 0v8l-5.500-4zM14 0v8l-5.500-4z" fill="#9a9a9a"/></svg>
<div style="left:339px;top:724px;width:10px;height:8px;background:#9a9a9a;"></div>
<svg style="left:369px;top:724px;" width="14" height="8" viewBox="0 0 14 8"><path d="M12 0h2v8h-2zM0 0v8l5.500-4zM6 0v8l5.500-4z" fill="#9a9a9a"/></svg>
<svg style="left:444px;top:722px;" width="12" height="6" viewBox="0 0 12 6"><path d="M3 0h2v5h-5v-2h3zM9 0h-2v5h5v-2h-3z" fill="#9a9a9a"/></svg>
<div style="left:829.3px;top:717px;width:23px;height:20px;background:#ececec;border:1px solid #c0c0c0;"></div>
<svg style="left:835px;top:725px;" width="12" height="6" viewBox="0 0 12 6"><path d="M0 3l3-3v2h6v-2l3 3-3 3v-2h-6v2z" fill="#9a9a9a"/></svg>
<span class="t" style="left:890.50px;top:722.00px;font-size:11px;color:#9b9b9b;font-family:'Liberation Sans',sans-serif;letter-spacing:-1.272px;">40%</span>
<svg style="left:925.5px;top:717px;" width="31" height="12" viewBox="0 0 31 12"><path d="M0 10.800l29-6.200v8" fill="none" stroke="#7d7d7d" stroke-width="1.200"/></svg>
<span class="t" style="left:973.80px;top:725.00px;font-size:12px;color:#1c1c2c;font-family:'Liberation Sans',sans-serif;letter-spacing:-0.399px;">03:23/09:10</span>
<div style="left:1349px;top:103px;width:17px;height:625px;background:#f1f1f1;"></div>
<div style="left:1351px;top:120px;width:13px;height:366px;background:#c1c1c1;"></div>
<svg style="left:1353.5px;top:109.5px;" width="8" height="5" viewBox="0 0 8 5"><path d="M0 4.500l4-4.500 4 4.500z" fill="#a3a3a3"/></svg>
<svg style="left:1353.5px;top:716px;" width="8" height="5" viewBox="0 0 8 5"><path d="M0 0l4 4.500 4-4.500z" fill="#505050"/></svg>
<div style="left:7px;top:0px;width:669px;height:472px;background:#fff;box-shadow:0 4px 10px 0px rgba(0,0,0,.32);border:1px solid rgba(0,0,0,.6);border-top:1px solid rgba(60,45,10,.75);"></div>
<div style="left:8px;top:1px;width:667px;height:72px;background:#fff;"></div>
<svg style="left:16px;top:7px;" width="16" height="16" viewBox="0 0 16 16"><circle cx="8" cy="8" r="8" fill="#fff"/><path d="M8 8L1.070 4A8 8 0 0 1 14.930 4z" fill="#EA4335"/><path d="M8 8L14.930 4A8 8 0 0 1 8 16z" fill="#FBBC05"/><path d="M8 8L8 16A8 8 0 0 1 1.070 4z" fill="#34A853"/><circle cx="8" cy="8" r="3.700" fill="#fff"/><circle cx="8" cy="8" r="2.900" fill="#4285F4"/></svg>
<span class="t" style="left:37.40px;top:10.00px;font-size:12px;color:#000;font-family:'Liberation Sans',sans-serif;letter-spacing:-0.314px;">Open</span>
<svg style="left:655px;top:9.3px;" width="11" height="11" viewBox="0 0 11 11"><path d="M.5 .5l10 10M10.500 .5l-10 10" stroke="#111" stroke-width="1.100"/></svg>
<svg style="left:0px;top:0px;" width="120" height="73" viewBox="0 0 120 73"><g fill="none" stroke="#c9c9c9" stroke-width="1.300"><path d="M33 51h-11.500M27 45.500l-5.500 5.500 5.500 5.500"/><path d="M51 51h11.500M57 45.500l5.500 5.500-5.500 5.500"/><path d="M77.500 48.500l3 3 3-3" stroke-width="1.100"/></g><g fill="none" stroke="#5a5a5a" stroke-width="1.400"><path d="M100.800 57.500v-11M95.300 52l5.500-5.500 5.500 5.500"/></g></svg>
<div style="left:114px;top:36px;width:335px;height:30px;background:#fff;border:1px solid #d9d9d9;"></div>
<div style="left:415px;top:37px;width:1px;height:28px;background:#d9d9d9;"></div>
<svg style="left:119px;top:42px;" width="13" height="16" viewBox="0 0 13 16"><path d="M0 0h11v15.500h-11z" fill="#FBE08A"/><path d="M11 9.500h1.800v6h-1.800z" fill="#F3CB5A"/><path d="M0 0h11v1h-11z" fill="#F7D774"/></svg>
<svg style="left:138px;top:47.5px;" width="8" height="7" viewBox="0 0 8 7"><path d="M3.500 .5l-3 3 3 3M7.500 .5l-3 3 3 3" fill="none" stroke="#555" stroke-width="1"/></svg>
<span class="t" style="left:154.00px;top:45.00px;font-size:12px;color:#000;font-family:'Liberation Sans',sans-serif;letter-spacing:0.055px;">farmer</span>
<span class="t" style="left:212.30px;top:45.00px;font-size:12px;color:#000;font-family:'Liberation Sans',sans-serif;letter-spacing:0.081px;">client</span>
<span class="t" style="left:264.10px;top:45.00px;font-size:12px;color:#000;font-family:'Liberation Sans',sans-serif;letter-spacing:-0.131px;">images</span>
<svg style="left:198px;top:48px;" width="5" height="8" viewBox="0 0 5 8"><path d="M.8 .8l3 3.200-3 3.200" fill="none" stroke="#777" stroke-width="1.200"/></svg>
<svg style="left:250px;top:48px;" width="5" height="8" viewBox="0 0 5 8"><path d="M.8 .8l3 3.200-3 3.200" fill="none" stroke="#777" stroke-width="1.200"/></svg>
<svg style="left:395.5px;top:49.5px;" width="9" height="6" viewBox="0 0 9 6"><path d="M.5 .7l4 4 4-4" fill="none" stroke="#444" stroke-width="1.300"/></svg>
<svg style="left:427px;top:44px;" width="13" height="13" viewBox="-1 -1 13 13"><path d="M9.300 3.200a4.800 4.800 0 1 1-3.600-1.700h2.600" fill="none" stroke="#666" stroke-width="1.200"/><path d="M6.800 -0.300v4h3.200" fill="none" stroke="#666" stroke-width="1.100"/></svg>
<div style="left:461px;top:36px;width:203px;height:30px;background:#fff;border:1px solid #d9d9d9;"></div>
<svg style="left:476px;top:44.5px;" width="13" height="13" viewBox="0 0 13 13"><circle cx="8" cy="4.800" r="3.800" fill="none" stroke="#8a8a8a" stroke-width="1.100"/><path d="M5.200 7.500l-4.700 4.700" stroke="#8a8a8a" stroke-width="1.100"/></svg>
<span class="t" style="left:502.40px;top:45.00px;font-size:12px;color:#6d6d6d;font-family:'Liberation Sans',sans-serif;letter-spacing:-0.342px;">Search images</span>
<div style="left:8px;top:73px;width:667px;height:31px;background:#f5f6f7;border-bottom:1px solid #e8e9ea;"></div>
<span class="t" style="left:26.40px;top:82.00px;font-size:12px;color:#1e3287;font-family:'Liberation Sans',sans-serif;letter-spacing:-0.261px;color:#1a2a5a;">Organize</span>
<svg style="left:79.3px;top:85.8px;" width="8" height="5" viewBox="0 0 8 5"><path d="M0 0h7.400l-3.700 4.800z" fill="#1a2a5a"/></svg>
<span class="t" style="left:117.40px;top:82.00px;font-size:12px;color:#1a2a5a;font-family:'Liberation Sans',sans-serif;letter-spacing:0.014px;">New folder</span>
<svg style="left:554px;top:82px;" width="14" height="11" viewBox="0 0 14 11"><rect x=".5" y=".5" width="13" height="10" fill="#fff" stroke="#8a8a8a"/><rect x="2" y="2" width="10" height="7" fill="#9cc3e6"/><path d="M2 9l3-3 2.500 1.500 2-1 2.500 1.500v1z" fill="#2f5f6f"/><path d="M2 2h10v2.500h-10z" fill="#dfeaf5"/></svg>
<svg style="left:578.8px;top:85.8px;" width="8" height="5" viewBox="0 0 8 5"><path d="M0 0h7.400l-3.700 4.800z" fill="#1a2a5a"/></svg>
<svg style="left:608px;top:82px;" width="16" height="12" viewBox="0 0 16 12"><rect x=".5" y=".5" width="15" height="11" fill="#fff" stroke="#777"/><rect x="5.500" y="1" width="1" height="10" fill="#777"/><rect x="9" y="1.500" width="6" height="9" fill="#4a90d9"/></svg>
<div style="left:644px;top:80px;width:16px;height:16px;background:#0a5fb8;border-radius:50%;"></div>
<span class="t" style="left:648.33px;top:82.00px;font-size:12px;color:#fff;font-family:'Liberation Sans',sans-serif;font-weight:bold;">?</span>
<div style="left:8px;top:104px;width:667px;height:292px;background:#fff;"></div>
<div style="left:8px;top:304px;width:141px;height:24px;background:#d9d9d9;"></div>
<div style="left:149px;top:104px;width:16px;height:292px;background:#f0f0f0;"></div>
<div style="left:149px;top:239px;width:16px;height:129px;background:#cdcdcd;"></div>
<div style="left:166px;top:104px;width:1px;height:292px;background:#f3f3f3;"></div>
<svg style="left:153px;top:110px;" width="8" height="7" viewBox="0 0 8 7"><path d="M.5 5.800l3.300-3.600 3.300 3.600" fill="none" stroke="#505050" stroke-width="1.600"/></svg>
<svg style="left:153px;top:384px;" width="8" height="7" viewBox="0 0 8 7"><path d="M.5 1l3.300 3.600 3.300-3.600" fill="none" stroke="#505050" stroke-width="1.600"/></svg>
<div style="left:0;top:104px;width:149px;height:292px;overflow:hidden"><div style="left:0;top:-104px;width:149px;height:400px"><svg style="left:32px;top:116.5px;" width="16" height="16" viewBox="0 0 16 16"><rect x=".5" y=".5" width="15" height="10" fill="#49b3f0" stroke="#2b86c4"/><rect x="1.500" y="1.500" width="13" height="8" fill="#6fcbf7"/><rect x="6" y="11" width="4" height="2" fill="#8aa0b0"/><rect x="3" y="13" width="10" height="1.200" fill="#9ab"/><rect x="0" y="14.800" width="16" height=".8" fill="#a8b8c8"/></svg>
<span class="t" style="left:53.60px;top:118.00px;font-size:12px;color:#000;font-family:'Liberation Sans',sans-serif;letter-spacing:-0.653px;">This PC</span>
<svg style="left:40px;top:140px;" width="16" height="16" viewBox="0 0 16 16"><path d="M8 0l7.500 3v9.500l-7.500 3.500-7.500-3.500v-9.500z" fill="#2aa6c8"/><path d="M8 0l7.500 3-7.500 3.200-7.500-3.200z" fill="#62d4ee"/><path d="M.5 3l7.500 3.200v9.800l-7.500-3.500z" fill="#bdeef8"/><path d="M.5 9.500l7.500 -3.300v9.800l-7.500-3.500z" fill="#46c2e2"/><path d="M8 6.200l7.500-3.200v9.500l-7.500 3.500z" fill="#1290c2"/></svg>
<span class="t" style="left:61.20px;top:142.00px;font-size:12px;color:#000;font-family:'Liberation Sans',sans-serif;letter-spacing:-0.246px;">3D Objects</span>
<svg style="left:40px;top:166px;" width="16" height="12" viewBox="0 0 16 12"><rect y="0" width="16" height="11.500" rx=".8" fill="#1286e8"/><rect x="0" y="10" width="16" height="1.500" fill="#0a63b8"/><rect x="1.500" y="10.400" width="1" height=".8" fill="#fff"/><rect x="13.500" y="10.400" width="1" height=".8" fill="#fff"/></svg>
<span class="t" style="left:61.20px;top:166.00px;font-size:12px;color:#000;font-family:'Liberation Sans',sans-serif;letter-spacing:-0.217px;">Desktop</span>
<svg style="left:42px;top:188.5px;" width="13" height="16" viewBox="0 0 13 16"><path d="M.5 .5h8l3.500 3.500v10.500h-11.500z" fill="#fff" stroke="#8a8a8a"/><path d="M8.500 .5v3.500h3.500" fill="none" stroke="#8a8a8a"/><path d="M2.500 3h4M2.500 5h4M2.500 7.500h7M2.500 9.500h7M2.500 11.500h7" stroke="#3b82d0" stroke-width="1"/></svg>
<span class="t" style="left:61.20px;top:190.00px;font-size:12px;color:#000;font-family:'Liberation Sans',sans-serif;letter-spacing:0.068px;">Documents</span>
<svg style="left:40px;top:212px;" width="16" height="16" viewBox="0 0 16 16"><path d="M5 0h6v7.500h4.800l-7.800 8.300-7.800-8.300h4.800z" fill="#2e8de0"/></svg>
<span class="t" style="left:61.60px;top:214.00px;font-size:12px;color:#000;font-family:'Liberation Sans',sans-serif;letter-spacing:-0.108px;">Downloads</span>
<svg style="left:42px;top:236px;" width="12" height="16" viewBox="0 0 12 16"><path d="M4.800 0c1.200 2.800 5 3.400 5.700 7 .4 2-.4 3.600-1.600 4.800.6-2.400.2-4.400-2.600-5.600v6.800c0 1.700-1.400 3-3.200 3s-3.100-1.100-3.100-2.600 1.400-2.600 3.100-2.600c.6 0 1.200.1 1.700.4z" fill="#2f9be8"/></svg>
<span class="t" style="left:61.60px;top:238.00px;font-size:12px;color:#000;font-family:'Liberation Sans',sans-serif;letter-spacing:-0.167px;">Music</span>
<svg style="left:40px;top:262px;" width="16" height="12" viewBox="0 0 16 12"><rect x=".5" y=".5" width="15" height="11" fill="#fff" stroke="#9a9a9a"/><rect x="2" y="2" width="12" height="8" fill="#9fd0f0"/><path d="M2 10v-3l3-1.500 4 1.500 5-1v4z" fill="#2a5f6f"/><path d="M2 2h12v2.500h-12z" fill="#e5f0fa"/></svg>
<span class="t" style="left:61.60px;top:262.00px;font-size:12px;color:#000;font-family:'Liberation Sans',sans-serif;letter-spacing:-0.231px;">Pictures</span>
<svg style="left:41.5px;top:285px;" width="13" height="16" viewBox="0 0 13 16"><rect width="13" height="16" fill="#2a2a2a"/><rect x="2.500" y="1" width="8" height="6.500" fill="#6a9ad0"/><rect x="2.500" y="8.500" width="8" height="6.500" fill="#b89a40"/><path d="M3 6l3-3 4 4z" fill="#d8c050"/><path d="M.5 1.500h1v1.500h-1zM.5 5h1v1.500h-1zM.5 8.500h1v1.500h-1zM.5 12h1v1.500h-1zM11.500 1.500h1v1.500h-1zM11.500 5h1v1.500h-1zM11.500 8.500h1v1.500h-1zM11.500 12h1v1.500h-1z" fill="#eee"/></svg>
<span class="t" style="left:61.60px;top:286.00px;font-size:12px;color:#000;font-family:'Liberation Sans',sans-serif;letter-spacing:-0.329px;">Videos</span>
<svg style="left:39.5px;top:310px;" width="16" height="12" viewBox="0 0 16 12"><path d="M2 6.500l1.500-3h9l1.500 3z" fill="#c8c8c8"/><rect x="1.500" y="6.500" width="13" height="4.500" rx=".8" fill="#3c3c3c"/><rect x="1.500" y="6.500" width="13" height="1" fill="#8a8a8a"/><rect x="11.500" y="8.500" width="1.500" height="1.200" fill="#5fe05f"/><path d="M0 0h2.200v2.200h-2.200zM2.800 0h2.200v2.200h-2.200zM0 2.800h2.200v2.200h-2.200zM2.800 2.800h2.200v2.200h-2.200z" fill="#19a0e8"/></svg>
<span class="t" style="left:61.30px;top:310.00px;font-size:12px;color:#000;font-family:'Liberation Sans',sans-serif;letter-spacing:-0.332px;">Local Disk (C:)</span>
<svg style="left:39.5px;top:334.5px;" width="16" height="12" viewBox="0 0 16 12"><path d="M2 6.500l1.500-3h9l1.500 3z" fill="#c8c8c8"/><rect x="1.500" y="6.500" width="13" height="4.500" rx=".8" fill="#3c3c3c"/><rect x="1.500" y="6.500" width="13" height="1" fill="#8a8a8a"/><rect x="11.500" y="8.500" width="1.500" height="1.200" fill="#5fe05f"/></svg>
<span class="t" style="left:61.30px;top:334.00px;font-size:12px;color:#000;font-family:'Liberation Sans',sans-serif;letter-spacing:-0.113px;">New Volume (D:)</span>
<svg style="left:39.5px;top:358.5px;" width="16" height="12" viewBox="0 0 16 12"><path d="M2 6.500l1.500-3h9l1.500 3z" fill="#c8c8c8"/><rect x="1.500" y="6.500" width="13" height="4.500" rx=".8" fill="#3c3c3c"/><rect x="1.500" y="6.500" width="13" height="1" fill="#8a8a8a"/><rect x="11.500" y="8.500" width="1.500" height="1.200" fill="#5fe05f"/></svg>
<span class="t" style="left:61.30px;top:358.00px;font-size:12px;color:#000;font-family:'Liberation Sans',sans-serif;letter-spacing:-0.135px;">New Volume (E:)</span>
<svg style="left:32px;top:388px;" width="16" height="12" viewBox="0 0 16 12"><circle cx="9.500" cy="8" r="6.800" fill="#58b4ec"/><path d="M4 6c1.500-4 8-5 11-1-3-1-7-1-11 1z" fill="#c4e8fa"/><path d="M6 9c2-2 5-2 7 0z" fill="#2f8ad4"/><rect x="0" y="7.500" width="8" height="1.300" fill="#2a7fd0"/></svg>
<span class="t" style="left:53.40px;top:390.00px;font-size:12px;color:#000;font-family:'Liberation Sans',sans-serif;letter-spacing:-0.001px;">Network</span></div></div>
<div style="left:659px;top:104px;width:16px;height:292px;background:#f0f0f0;"></div>
<div style="left:659px;top:234px;width:16px;height:45px;background:#cdcdcd;"></div>
<svg style="left:662.5px;top:110px;" width="8" height="7" viewBox="0 0 8 7"><path d="M.5 5.800l3.300-3.600 3.300 3.600" fill="none" stroke="#505050" stroke-width="1.600"/></svg>
<div style="left:167px;top:104px;width:492px;height:292px;overflow:hidden"><div style="left:-167px;top:-104px;width:700px;height:500px"><div style="left:537px;top:279px;width:105px;height:130px;background:#e5f3ff;"></div>
<div style="left:189px;top:107px;width:90px;height:2px;background:#050505;box-shadow:1.500px 1.500px 1px rgba(0,0,0,.2);"></div>
<div style="left:307px;top:107px;width:90px;height:2px;background:#46592f;box-shadow:1.500px 1.500px 1px rgba(0,0,0,.2);"></div>
<div style="left:441px;top:100px;width:57.5px;height:9px;background:#6c8741;box-shadow:1.500px 1.500px 1px rgba(0,0,0,.15);"></div>
<div style="left:543px;top:100px;width:90px;height:8.5px;background:repeating-linear-gradient(100deg,#1a5a22 0 3px,#2f7a30 3px 4px,#124818 4px 7px,#4f9a44 7px 8px,#1c6026 8px 11px);box-shadow:1.500px 1.500px 1px rgba(0,0,0,.2);"></div>
<span class="t" style="left:192.40px;top:115.00px;font-size:12px;color:#000;font-family:'Liberation Sans',sans-serif;letter-spacing:-0.129px;">content_box2_to</span>
<span class="t" style="left:232.46px;top:130.00px;font-size:12px;color:#000;font-family:'Liberation Sans',sans-serif;">p</span>
<span class="t" style="left:322.45px;top:115.00px;font-size:12px;color:#000;font-family:'Liberation Sans',sans-serif;letter-spacing:0.035px;">content_top</span>
<span class="t" style="left:460.80px;top:115.00px;font-size:12px;color:#000;font-family:'Liberation Sans',sans-serif;letter-spacing:-0.289px;">date</span>
<span class="t" style="left:545.65px;top:115.00px;font-size:12px;color:#000;font-family:'Liberation Sans',sans-serif;letter-spacing:-0.139px;">Featured-image2</span>
<span class="t" style="left:189.80px;top:247.00px;font-size:12px;color:#000;font-family:'Liberation Sans',sans-serif;letter-spacing:-0.013px;">footer_top_borde</span>
<span class="t" style="left:233.40px;top:262.00px;font-size:12px;color:#000;font-family:'Liberation Sans',sans-serif;">r</span>
<span class="t" style="left:333.65px;top:247.00px;font-size:12px;color:#000;font-family:'Liberation Sans',sans-serif;letter-spacing:-0.563px;">header1</span>
<span class="t" style="left:451.75px;top:247.00px;font-size:12px;color:#000;font-family:'Liberation Sans',sans-serif;letter-spacing:-0.448px;">header2</span>
<span class="t" style="left:569.85px;top:247.00px;font-size:12px;color:#000;font-family:'Liberation Sans',sans-serif;letter-spacing:-0.448px;">header3</span>
<span class="t" style="left:215.75px;top:379.00px;font-size:12px;color:#000;font-family:'Liberation Sans',sans-serif;letter-spacing:-0.391px;">header4</span>
<span class="t" style="left:333.55px;top:379.00px;font-size:12px;color:#000;font-family:'Liberation Sans',sans-serif;letter-spacing:-0.391px;">header5</span>
<span class="t" style="left:451.40px;top:379.00px;font-size:12px;color:#000;font-family:'Liberation Sans',sans-serif;letter-spacing:-0.348px;">header6</span>
<span class="t" style="left:569.35px;top:379.00px;font-size:12px;color:#000;font-family:'Liberation Sans',sans-serif;letter-spacing:-0.391px;">header7</span>
<div style="left:189px;top:241px;width:90px;height:1.5px;background:#d4d4d4;"></div>
<div style="left:277.5px;top:240.5px;width:2px;height:2px;background:#9a9a9a;"></div>
<svg style="left:307px;top:193px;" width="93" height="51" viewBox="0 0 93 51"><defs><clipPath id="tc8"><rect x="1" y="1" width="88" height="46" rx="3.500"/></clipPath><filter id="tb8" x="-5%" y="-5%" width="110%" height="110%"><feGaussianBlur stdDeviation="0.55"/></filter><filter id="tn8" x="0" y="0" width="100%" height="100%"><feTurbulence type="fractalNoise" baseFrequency=".45" numOctaves="2" seed="3"/><feColorMatrix type="matrix" values="0 0 0 0 0  0 0 0 0 0  0 0 0 0 0  0 0 0 1.400 -.5"/></filter><linearGradient id="h1g" x1="0" y1="0" x2="1" y2=".5"><stop offset="0" stop-color="#a4c460"/><stop offset=".28" stop-color="#559c32"/><stop offset=".55" stop-color="#23802a"/><stop offset="1" stop-color="#146a20"/></linearGradient></defs><rect x="1.500" y="1.500" width="90" height="48" fill="#000" opacity=".18"/><rect x="1" y="1" width="90" height="48" fill="#000" opacity=".14"/><rect width="90" height="48" fill="#050505"/><g clip-path="url(#tc8)"><g filter="url(#tb8)"><rect x="-4" y="-4" width="98" height="56" fill="url(#h1g)"/><path d="M0 0h7l-7 9z" fill="#f2f6e6"/><path d="M23.5 1.5L23.7 45.9" stroke="#a4cc5c" stroke-width="1.2" opacity=".85"/><path d="M76.2 10.6L69.2 30.3" stroke="#3c9a34" stroke-width="1.2" opacity=".85"/><path d="M86.5 1.7L77.6 34.7" stroke="#136018" stroke-width="1.6" opacity=".85"/><path d="M13.5 3.3L13.3 40.0" stroke="#a4cc5c" stroke-width="0.6" opacity=".85"/><path d="M19.5 -0.6L9.9 46.2" stroke="#2f8a2c" stroke-width="1.5" opacity=".85"/><path d="M11.6 5.8L10.4 33.7" stroke="#86bc50" stroke-width="1.0" opacity=".85"/><path d="M13.0 8.8L4.2 46.1" stroke="#86bc50" stroke-width="0.8" opacity=".85"/><path d="M64.0 7.0L69.8 41.2" stroke="#3c9a34" stroke-width="0.7" opacity=".85"/><path d="M41.8 4.6L46.6 37.3" stroke="#57b03a" stroke-width="1.7" opacity=".85"/><path d="M47.0 2.3L42.1 46.7" stroke="#136018" stroke-width="1.2" opacity=".85"/><path d="M23.0 7.6L13.1 40.4" stroke="#a4cc5c" stroke-width="0.7" opacity=".85"/><path d="M56.9 0.9L55.8 33.4" stroke="#57b03a" stroke-width="1.3" opacity=".85"/><path d="M38.6 2.9L34.1 32.1" stroke="#57b03a" stroke-width="1.3" opacity=".85"/><path d="M15.4 8.9L17.8 43.5" stroke="#86bc50" stroke-width="1.0" opacity=".85"/><path d="M83.7 13.4L80.2 41.8" stroke="#2f9030" stroke-width="1.8" opacity=".85"/><path d="M82.4 13.0L80.5 34.9" stroke="#136018" stroke-width="1.4" opacity=".85"/><path d="M56.1 5.7L59.0 46.7" stroke="#136018" stroke-width="1.5" opacity=".85"/><path d="M14.3 2.0L14.8 37.9" stroke="#2f8a2c" stroke-width="0.6" opacity=".85"/><path d="M81.4 9.9L85.8 39.6" stroke="#7cc448" stroke-width="1.8" opacity=".85"/><path d="M30.7 13.2L35.3 48.0" stroke="#6aa83e" stroke-width="1.2" opacity=".85"/><path d="M40.0 4.8L44.1 41.6" stroke="#2f9030" stroke-width="1.3" opacity=".85"/><path d="M79.6 0.2L71.9 44.4" stroke="#57b03a" stroke-width="1.3" opacity=".85"/><path d="M41.4 7.5L46.6 42.9" stroke="#2f9030" stroke-width="0.6" opacity=".85"/><path d="M79.8 10.0L76.6 46.2" stroke="#3c9a34" stroke-width="1.4" opacity=".85"/><path d="M21.4 -1.6L12.9 38.9" stroke="#86bc50" stroke-width="0.7" opacity=".85"/><path d="M21.5 6.6L22.0 36.5" stroke="#4f9a34" stroke-width="0.8" opacity=".85"/><path d="M50.5 11.7L50.4 34.0" stroke="#2f9030" stroke-width="0.8" opacity=".85"/><path d="M71.0 9.9L70.7 31.1" stroke="#1a6a20" stroke-width="1.2" opacity=".85"/><path d="M86.2 10.2L83.6 33.5" stroke="#136018" stroke-width="0.7" opacity=".85"/><path d="M68.3 9.9L73.8 34.9" stroke="#57b03a" stroke-width="1.3" opacity=".85"/><path d="M22.8 5.8L25.9 41.5" stroke="#2f8a2c" stroke-width="1.6" opacity=".85"/><path d="M54.7 13.5L52.9 36.2" stroke="#1a6a20" stroke-width="1.5" opacity=".85"/><path d="M67.4 7.9L69.5 36.5" stroke="#3c9a34" stroke-width="0.8" opacity=".85"/><path d="M26.5 -0.3L21.6 31.5" stroke="#4f9a34" stroke-width="1.8" opacity=".85"/><path d="M16.0 8.9L14.1 44.1" stroke="#a4cc5c" stroke-width="1.7" opacity=".85"/><path d="M48.6 1.6L44.8 31.0" stroke="#3c9a34" stroke-width="1.1" opacity=".85"/><path d="M45.6 4.5L40.0 38.5" stroke="#2f9030" stroke-width="1.3" opacity=".85"/><path d="M75.4 8.1L71.6 49.3" stroke="#136018" stroke-width="1.2" opacity=".85"/><path d="M17.0 7.7L9.8 34.3" stroke="#a4cc5c" stroke-width="1.0" opacity=".85"/><path d="M46.9 11.7L49.0 44.0" stroke="#7cc448" stroke-width="1.4" opacity=".85"/><path d="M66.0 2.9L63.7 37.6" stroke="#2f9030" stroke-width="1.2" opacity=".85"/><path d="M53.0 3.0L58.8 36.2" stroke="#7cc448" stroke-width="0.6" opacity=".85"/><path d="M42.1 6.4L33.5 42.4" stroke="#2f9030" stroke-width="0.8" opacity=".85"/><path d="M40.8 13.3L38.2 44.1" stroke="#7cc448" stroke-width="0.7" opacity=".85"/><path d="M26.9 1.0L22.8 31.6" stroke="#2f8a2c" stroke-width="1.3" opacity=".85"/><path d="M12.3 0.5L6.4 43.6" stroke="#6aa83e" stroke-width="1.6" opacity=".85"/><path d="M26.4 0.5L27.4 37.9" stroke="#6aa83e" stroke-width="1.5" opacity=".85"/><path d="M42.9 0.8L42.8 37.7" stroke="#136018" stroke-width="0.9" opacity=".85"/><path d="M32.3 3.6L37.9 42.6" stroke="#86bc50" stroke-width="0.9" opacity=".85"/><path d="M81.5 -1.4L71.8 42.2" stroke="#57b03a" stroke-width="1.2" opacity=".85"/><path d="M67.4 0.4L73.3 49.5" stroke="#2f9030" stroke-width="1.7" opacity=".85"/><path d="M25.6 0.2L29.9 45.8" stroke="#2f8a2c" stroke-width="1.0" opacity=".85"/><path d="M77.4 4.7L80.9 47.7" stroke="#3c9a34" stroke-width="1.0" opacity=".85"/><path d="M30.0 12.8L32.9 47.7" stroke="#6aa83e" stroke-width="1.6" opacity=".85"/><path d="M11.4 11.3L2.6 49.8" stroke="#6aa83e" stroke-width="1.1" opacity=".85"/><path d="M64.0 7.7L54.9 42.4" stroke="#2f9030" stroke-width="1.6" opacity=".85"/><path d="M48.6 3.7L44.0 36.0" stroke="#7cc448" stroke-width="0.9" opacity=".85"/><path d="M61.4 -0.4L62.1 46.6" stroke="#1a6a20" stroke-width="0.8" opacity=".85"/><path d="M39.5 5.9L30.5 43.6" stroke="#57b03a" stroke-width="0.6" opacity=".85"/><path d="M63.6 3.7L54.1 35.0" stroke="#2f9030" stroke-width="0.9" opacity=".85"/><path d="M26.3 -0.7L28.0 46.5" stroke="#86bc50" stroke-width="1.2" opacity=".85"/><path d="M27.5 8.1L29.2 42.9" stroke="#4f9a34" stroke-width="1.3" opacity=".85"/><path d="M11.7 11.6L9.6 46.1" stroke="#2f8a2c" stroke-width="0.8" opacity=".85"/><path d="M84.3 8.4L75.2 42.3" stroke="#7cc448" stroke-width="1.4" opacity=".85"/><path d="M59.5 13.1L65.0 48.7" stroke="#1a6a20" stroke-width="1.1" opacity=".85"/><path d="M75.1 2.2L79.7 30.5" stroke="#1a6a20" stroke-width="0.8" opacity=".85"/><path d="M40.8 6.6L33.4 47.6" stroke="#7cc448" stroke-width="1.7" opacity=".85"/><path d="M27.0 9.8L25.8 47.7" stroke="#6aa83e" stroke-width="1.5" opacity=".85"/><path d="M39.7 3.6L33.6 43.4" stroke="#1a6a20" stroke-width="1.3" opacity=".85"/><path d="M81.1 4.8L73.2 41.6" stroke="#3c9a34" stroke-width="0.6" opacity=".85"/><path d="M-2 27l12 3 14 13-2 8h-24z" fill="#4f6a66"/><path d="M-2 36l14 4 8 10h-22z" fill="#3d5560"/><path d="M15 -1l8 0 25 28-4 3z" fill="#a8d648"/><path d="M18 -1l3 0 25 28-2 1z" fill="#c4e466"/><ellipse cx="5.1" cy="6.3" rx="1.4" ry="1.6" fill="#e4d49c"/><ellipse cx="6.3" cy="8.3" rx="1.4" ry="1.7" fill="#b89c5c"/><ellipse cx="5.2" cy="10.4" rx="1.7" ry="1.6" fill="#c8b070"/><ellipse cx="4.0" cy="12.6" rx="1.6" ry="2.0" fill="#e4d49c"/><ellipse cx="3.1" cy="15.6" rx="1.4" ry="2.3" fill="#e4d49c"/><ellipse cx="3.7" cy="17.7" rx="1.9" ry="2.2" fill="#c8b070"/><ellipse cx="2.8" cy="19.3" rx="1.3" ry="2.2" fill="#e4d49c"/><ellipse cx="2.7" cy="22.5" rx="1.4" ry="1.7" fill="#b89c5c"/><ellipse cx="2.3" cy="23.2" rx="2.1" ry="1.6" fill="#e4d49c"/><ellipse cx="13.9" cy="9.8" rx="1.6" ry="1.9" fill="#d8c488"/><ellipse cx="13.9" cy="12.7" rx="1.4" ry="1.5" fill="#b89c5c"/><ellipse cx="12.9" cy="15.4" rx="1.3" ry="2.1" fill="#d8c488"/><ellipse cx="12.0" cy="16.6" rx="1.2" ry="2.0" fill="#e4d49c"/><ellipse cx="9.9" cy="19.5" rx="1.6" ry="1.8" fill="#c8b070"/><ellipse cx="9.8" cy="22.0" rx="1.3" ry="1.9" fill="#e4d49c"/><ellipse cx="9.8" cy="24.0" rx="1.1" ry="2.1" fill="#e4d49c"/><ellipse cx="23.1" cy="10.3" rx="1.4" ry="1.3" fill="#d8c488"/><ellipse cx="23.8" cy="11.6" rx="1.6" ry="1.6" fill="#e4d49c"/><ellipse cx="21.5" cy="13.2" rx="1.8" ry="1.3" fill="#b89c5c"/><ellipse cx="21.0" cy="16.2" rx="1.4" ry="1.7" fill="#c8b070"/><ellipse cx="19.2" cy="17.6" rx="1.7" ry="2.0" fill="#c8b070"/><ellipse cx="18.7" cy="20.6" rx="1.6" ry="1.5" fill="#c8b070"/><ellipse cx="16.3" cy="22.5" rx="1.3" ry="1.5" fill="#c8b070"/><ellipse cx="44.9" cy="4.9" rx="1.2" ry="1.2" fill="#c8b070"/><ellipse cx="43.0" cy="5.7" rx="1.1" ry="1.7" fill="#d8c488"/><ellipse cx="40.9" cy="6.7" rx="1.1" ry="1.8" fill="#c8b070"/><ellipse cx="39.1" cy="7.8" rx="1.2" ry="1.7" fill="#d8c488"/><ellipse cx="36.8" cy="9.6" rx="1.6" ry="2.0" fill="#d8c488"/><ellipse cx="35.5" cy="11.6" rx="1.7" ry="1.8" fill="#b89c5c"/><ellipse cx="33.1" cy="12.0" rx="1.7" ry="1.9" fill="#b89c5c"/><ellipse cx="57.4" cy="6.7" rx="1.3" ry="2.3" fill="#b89c5c"/><ellipse cx="57.8" cy="8.2" rx="1.3" ry="1.7" fill="#b89c5c"/><ellipse cx="57.0" cy="10.2" rx="1.9" ry="1.4" fill="#e4d49c"/><ellipse cx="56.3" cy="12.5" rx="1.9" ry="1.5" fill="#c8b070"/><ellipse cx="55.1" cy="14.6" rx="1.4" ry="2.1" fill="#c8b070"/><ellipse cx="53.9" cy="17.3" rx="1.9" ry="1.9" fill="#d8c488"/><ellipse cx="54.4" cy="19.0" rx="1.7" ry="1.7" fill="#c8b070"/><ellipse cx="52.6" cy="21.5" rx="1.7" ry="1.8" fill="#d8c488"/><ellipse cx="52.8" cy="23.0" rx="1.2" ry="1.6" fill="#e4d49c"/><ellipse cx="51.3" cy="26.1" rx="1.9" ry="2.3" fill="#c8b070"/><ellipse cx="52.1" cy="27.9" rx="1.5" ry="1.6" fill="#c8b070"/><ellipse cx="51.4" cy="30.0" rx="1.5" ry="2.3" fill="#c8b070"/><ellipse cx="81.6" cy="8.4" rx="1.6" ry="1.9" fill="#d8c488"/><ellipse cx="83.2" cy="10.0" rx="1.8" ry="1.5" fill="#b89c5c"/><ellipse cx="83.5" cy="13.3" rx="1.6" ry="1.2" fill="#e4d49c"/><ellipse cx="84.2" cy="14.9" rx="1.8" ry="1.9" fill="#c8b070"/><ellipse cx="84.4" cy="18.4" rx="1.7" ry="1.9" fill="#c8b070"/><ellipse cx="84.2" cy="20.5" rx="1.4" ry="2.1" fill="#b89c5c"/><ellipse cx="84.4" cy="23.4" rx="1.6" ry="1.7" fill="#d8c488"/><ellipse cx="84.4" cy="24.3" rx="1.1" ry="1.6" fill="#b89c5c"/><ellipse cx="84.7" cy="27.8" rx="1.1" ry="1.7" fill="#e4d49c"/><ellipse cx="86.3" cy="30.6" rx="1.3" ry="1.9" fill="#d8c488"/><ellipse cx="39.6" cy="30.2" rx="1.6" ry="2.3" fill="#e4d49c"/><ellipse cx="38.3" cy="33.3" rx="2.1" ry="1.7" fill="#e4d49c"/><ellipse cx="36.0" cy="34.0" rx="2.1" ry="1.8" fill="#c8b070"/><ellipse cx="35.8" cy="35.5" rx="2.0" ry="1.4" fill="#e4d49c"/><ellipse cx="32.6" cy="38.0" rx="1.9" ry="2.0" fill="#d8c488"/><ellipse cx="32.5" cy="38.6" rx="1.8" ry="2.0" fill="#c8b070"/><ellipse cx="30.9" cy="40.9" rx="1.4" ry="2.3" fill="#d8c488"/><ellipse cx="28.0" cy="42.7" rx="1.6" ry="1.8" fill="#b89c5c"/><ellipse cx="26.8" cy="44.5" rx="1.5" ry="2.4" fill="#d8c488"/><ellipse cx="59.5" cy="33.7" rx="1.6" ry="2.0" fill="#c8b070"/><ellipse cx="59.2" cy="34.4" rx="2.2" ry="2.6" fill="#b89c5c"/><ellipse cx="56.8" cy="36.9" rx="1.5" ry="2.3" fill="#b89c5c"/><ellipse cx="55.5" cy="37.9" rx="2.2" ry="1.6" fill="#b89c5c"/><ellipse cx="53.5" cy="39.1" rx="2.1" ry="2.6" fill="#d8c488"/><ellipse cx="51.4" cy="38.7" rx="1.6" ry="1.7" fill="#d8c488"/><ellipse cx="49.4" cy="39.8" rx="2.2" ry="2.6" fill="#b89c5c"/><ellipse cx="46.5" cy="41.5" rx="2.3" ry="2.5" fill="#b89c5c"/><ellipse cx="45.4" cy="42.4" rx="1.9" ry="2.2" fill="#c8b070"/><ellipse cx="43.2" cy="44.5" rx="1.5" ry="2.6" fill="#e4d49c"/><ellipse cx="41.9" cy="45.3" rx="1.7" ry="2.4" fill="#e4d49c"/><ellipse cx="40.1" cy="45.3" rx="1.4" ry="1.8" fill="#c8b070"/><ellipse cx="33.9" cy="20.0" rx="1.4" ry="1.4" fill="#b89c5c"/><ellipse cx="32.6" cy="22.2" rx="1.5" ry="1.5" fill="#b89c5c"/><ellipse cx="32.1" cy="25.7" rx="1.5" ry="2.0" fill="#e4d49c"/><ellipse cx="30.4" cy="27.5" rx="1.5" ry="2.1" fill="#c8b070"/><ellipse cx="67.2" cy="28.4" rx="1.0" ry="1.5" fill="#b89c5c"/><ellipse cx="67.0" cy="30.0" rx="1.1" ry="1.0" fill="#d8c488"/><ellipse cx="66.3" cy="32.9" rx="0.9" ry="1.7" fill="#c8b070"/><ellipse cx="64.8" cy="35.2" rx="1.2" ry="1.7" fill="#c8b070"/><ellipse cx="63.5" cy="37.9" rx="1.4" ry="1.6" fill="#b89c5c"/><ellipse cx="61.5" cy="40.3" rx="1.1" ry="1.0" fill="#e4d49c"/><path d="M73 -1h5l-3 48h-4z" fill="#46ac34"/><path d="M80 20h10v28h-12z" fill="#10581a" opacity=".8"/></g><rect width="90" height="48" filter="url(#tn8)" opacity="0.1"/></g></svg>
<svg style="left:425px;top:193px;" width="93" height="51" viewBox="0 0 93 51"><defs><clipPath id="tc9"><rect x="1" y="1" width="88" height="46" rx="3.500"/></clipPath><filter id="tb9" x="-5%" y="-5%" width="110%" height="110%"><feGaussianBlur stdDeviation="0.5"/></filter><filter id="tn9" x="0" y="0" width="100%" height="100%"><feTurbulence type="fractalNoise" baseFrequency=".45" numOctaves="2" seed="5"/><feColorMatrix type="matrix" values="0 0 0 0 0  0 0 0 0 0  0 0 0 0 0  0 0 0 1.400 -.5"/></filter><linearGradient id="h2s" x1="0" y1="0" x2="0" y2="1"><stop offset="0" stop-color="#2f72d0"/><stop offset=".55" stop-color="#9cbce8"/><stop offset="1" stop-color="#a8c0de"/></linearGradient><linearGradient id="h2f" x1="0" y1="0" x2="1" y2="0"><stop offset="0" stop-color="#4a8a32"/><stop offset=".5" stop-color="#376e2c"/><stop offset="1" stop-color="#1e401a"/></linearGradient></defs><rect x="1.500" y="1.500" width="90" height="48" fill="#000" opacity=".18"/><rect x="1" y="1" width="90" height="48" fill="#000" opacity=".14"/><rect width="90" height="48" fill="#050505"/><g clip-path="url(#tc9)"><g filter="url(#tb9)"><rect x="-4" y="-4" width="98" height="19" fill="url(#h2s)"/><ellipse cx="24" cy="7.500" rx="26" ry="2.400" fill="#eef2f8"/><ellipse cx="36" cy="6" rx="10" ry="2" fill="#f6f8fb"/><ellipse cx="68" cy="6.500" rx="18" ry="3.800" fill="#f6f8fb"/><ellipse cx="84" cy="5" rx="8" ry="4" fill="#e2eaf4"/><ellipse cx="6" cy="3" rx="7" ry="1.500" fill="#c8daf2"/><rect x="-4" y="10" width="98" height="3.500" fill="#c4d4e8" opacity=".8"/><rect x="-4" y="13.600" width="98" height="40" fill="url(#h2f)"/><rect x="-4" y="13" width="98" height="1.200" fill="#3a6a52"/><path d="M44.5 14.5L-70 50L-44 50z" fill="#4f963a" opacity="0.8"/><path d="M44.5 14.5L-44 50L-30 50z" fill="#a48846" opacity="0.9"/><path d="M44.5 14.5L-30 50L-16 50z" fill="#4a9236" opacity="0.85"/><path d="M44.5 14.5L-16 50L-6 50z" fill="#9c7c3e" opacity="0.9"/><path d="M44.5 14.5L-6 50L2 50z" fill="#2a1e0e" opacity="0.8"/><path d="M44.5 14.5L2 50L14 50z" fill="#52a03a" opacity="0.9"/><path d="M44.5 14.5L14 50L20 50z" fill="#b08a44" opacity="0.95"/><path d="M44.5 14.5L20 50L27 50z" fill="#8a6a30" opacity="0.9"/><path d="M44.5 14.5L27 50L37 50z" fill="#1e160a" opacity="0.92"/><path d="M44.5 14.5L37 50L45 50z" fill="#5eaa44" opacity="1"/><path d="M44.5 14.5L45 50L50 50z" fill="#96763a" opacity="0.9"/><path d="M44.5 14.5L50 50L62 50z" fill="#140f08" opacity="0.92"/><path d="M44.5 14.5L62 50L74 50z" fill="#4c923c" opacity="0.9"/><path d="M44.5 14.5L74 50L92 50z" fill="#181a0c" opacity="0.88"/><path d="M44.5 14.5L92 50L112 50z" fill="#3c7832" opacity="0.8"/><path d="M44.5 14.5L112 50L140 50z" fill="#1a2610" opacity="0.85"/><path d="M44.5 14.5L140 50L175 50z" fill="#33682c" opacity="0.8"/><path d="M44.5 14.5L175 50L230 50z" fill="#1a2a12" opacity="0.8"/><rect x="-4" y="13.800" width="98" height="5" fill="#3a722e" opacity=".8"/><rect x="-4" y="18" width="98" height="4" fill="#3a722e" opacity=".4"/><rect x="50" y="13.800" width="44" height="9" fill="#214620" opacity=".55"/><ellipse cx="56.1" cy="40.8" rx="0.6" ry="0.6" fill="#2a4a1c" opacity=".55"/><ellipse cx="84.9" cy="38.2" rx="0.7" ry="0.6" fill="#3a7a2c" opacity=".55"/><ellipse cx="22.2" cy="35.2" rx="0.8" ry="0.8" fill="#2a4a1c" opacity=".55"/><ellipse cx="36.7" cy="25.1" rx="0.8" ry="0.8" fill="#87c85c" opacity=".55"/><ellipse cx="12.5" cy="37.3" rx="0.7" ry="0.9" fill="#3a7a2c" opacity=".55"/><ellipse cx="0.5" cy="41.7" rx="1.5" ry="0.5" fill="#3a7a2c" opacity=".55"/><ellipse cx="86.5" cy="35.1" rx="0.8" ry="0.9" fill="#3a7a2c" opacity=".55"/><ellipse cx="17.7" cy="47.0" rx="0.9" ry="0.6" fill="#87c85c" opacity=".55"/><ellipse cx="14.9" cy="24.1" rx="0.9" ry="0.8" fill="#6cb84a" opacity=".55"/><ellipse cx="52.8" cy="36.7" rx="0.7" ry="0.6" fill="#1a1408" opacity=".55"/><ellipse cx="27.5" cy="39.5" rx="1.1" ry="0.8" fill="#3a7a2c" opacity=".55"/><ellipse cx="5.1" cy="47.3" rx="1.5" ry="0.6" fill="#6cb84a" opacity=".55"/><ellipse cx="36.4" cy="35.4" rx="1.0" ry="0.7" fill="#87c85c" opacity=".55"/><ellipse cx="0.8" cy="21.3" rx="1.2" ry="0.9" fill="#3a7a2c" opacity=".55"/><ellipse cx="10.7" cy="26.9" rx="0.9" ry="0.6" fill="#87c85c" opacity=".55"/><ellipse cx="47.2" cy="41.7" rx="1.2" ry="0.8" fill="#6cb84a" opacity=".55"/><ellipse cx="33.1" cy="28.3" rx="1.5" ry="0.4" fill="#87c85c" opacity=".55"/><ellipse cx="30.7" cy="37.1" rx="0.9" ry="0.9" fill="#3a7a2c" opacity=".55"/><ellipse cx="49.1" cy="28.7" rx="0.9" ry="0.8" fill="#1a1408" opacity=".55"/><ellipse cx="56.4" cy="40.2" rx="1.6" ry="0.5" fill="#1a1408" opacity=".55"/><ellipse cx="4.4" cy="47.6" rx="1.5" ry="0.4" fill="#2a4a1c" opacity=".55"/><ellipse cx="66.7" cy="29.6" rx="1.1" ry="0.6" fill="#1a1408" opacity=".55"/><ellipse cx="5.0" cy="45.6" rx="1.4" ry="0.6" fill="#6cb84a" opacity=".55"/><ellipse cx="18.6" cy="47.5" rx="1.5" ry="0.7" fill="#2a4a1c" opacity=".55"/><ellipse cx="70.9" cy="23.0" rx="1.0" ry="0.4" fill="#87c85c" opacity=".55"/><ellipse cx="37.9" cy="24.0" rx="1.5" ry="0.9" fill="#2a4a1c" opacity=".55"/><ellipse cx="40.8" cy="33.7" rx="1.1" ry="0.5" fill="#1a1408" opacity=".55"/><ellipse cx="36.3" cy="24.1" rx="1.4" ry="0.7" fill="#87c85c" opacity=".55"/><ellipse cx="16.1" cy="46.2" rx="0.8" ry="0.6" fill="#1a1408" opacity=".55"/><ellipse cx="46.4" cy="35.3" rx="1.0" ry="0.8" fill="#2a4a1c" opacity=".55"/><ellipse cx="69.7" cy="39.4" rx="1.4" ry="0.6" fill="#6cb84a" opacity=".55"/><ellipse cx="63.4" cy="27.9" rx="0.9" ry="0.9" fill="#87c85c" opacity=".55"/><ellipse cx="64.4" cy="46.8" rx="1.2" ry="0.7" fill="#1a1408" opacity=".55"/><ellipse cx="1.0" cy="35.3" rx="0.9" ry="0.5" fill="#1a1408" opacity=".55"/><ellipse cx="26.0" cy="34.0" rx="0.9" ry="0.7" fill="#1a1408" opacity=".55"/><ellipse cx="66.4" cy="43.2" rx="1.5" ry="0.5" fill="#1a1408" opacity=".55"/><ellipse cx="78.0" cy="32.6" rx="1.6" ry="0.7" fill="#1a1408" opacity=".55"/><ellipse cx="47.6" cy="24.7" rx="1.5" ry="0.6" fill="#1a1408" opacity=".55"/><ellipse cx="62.2" cy="40.2" rx="0.8" ry="0.8" fill="#87c85c" opacity=".55"/><ellipse cx="52.3" cy="38.6" rx="0.9" ry="0.7" fill="#87c85c" opacity=".55"/><ellipse cx="78.0" cy="27.6" rx="0.8" ry="0.7" fill="#6cb84a" opacity=".55"/><ellipse cx="56.2" cy="25.1" rx="1.2" ry="0.4" fill="#3a7a2c" opacity=".55"/><ellipse cx="42.4" cy="26.3" rx="1.5" ry="0.5" fill="#6cb84a" opacity=".55"/><ellipse cx="87.1" cy="33.5" rx="0.6" ry="0.6" fill="#2a4a1c" opacity=".55"/><ellipse cx="34.2" cy="37.1" rx="0.8" ry="0.8" fill="#2a4a1c" opacity=".55"/><ellipse cx="33.7" cy="29.8" rx="1.5" ry="0.8" fill="#1a1408" opacity=".55"/><ellipse cx="62.0" cy="35.3" rx="1.1" ry="0.6" fill="#6cb84a" opacity=".55"/><ellipse cx="26.6" cy="34.4" rx="0.9" ry="0.6" fill="#2a4a1c" opacity=".55"/><ellipse cx="11.6" cy="31.5" rx="1.2" ry="0.6" fill="#2a4a1c" opacity=".55"/><ellipse cx="12.8" cy="36.7" rx="1.1" ry="0.5" fill="#2a4a1c" opacity=".55"/><ellipse cx="12.0" cy="22.5" rx="1.0" ry="0.6" fill="#6cb84a" opacity=".55"/><ellipse cx="82.5" cy="35.1" rx="1.2" ry="0.8" fill="#1a1408" opacity=".55"/><ellipse cx="33.8" cy="32.1" rx="1.1" ry="0.6" fill="#3a7a2c" opacity=".55"/><ellipse cx="63.7" cy="30.7" rx="1.2" ry="0.5" fill="#3a7a2c" opacity=".55"/><ellipse cx="88.3" cy="33.9" rx="0.6" ry="0.9" fill="#87c85c" opacity=".55"/><ellipse cx="27.7" cy="46.0" rx="1.1" ry="0.5" fill="#3a7a2c" opacity=".55"/><ellipse cx="56.0" cy="32.4" rx="0.6" ry="0.5" fill="#1a1408" opacity=".55"/><ellipse cx="35.3" cy="33.4" rx="0.9" ry="0.9" fill="#2a4a1c" opacity=".55"/><ellipse cx="70.4" cy="26.9" rx="1.4" ry="0.8" fill="#1a1408" opacity=".55"/><ellipse cx="25.7" cy="33.8" rx="1.1" ry="0.8" fill="#87c85c" opacity=".55"/><ellipse cx="79.3" cy="45.1" rx="1.4" ry="0.6" fill="#6cb84a" opacity=".55"/><ellipse cx="48.0" cy="29.4" rx="1.3" ry="0.4" fill="#1a1408" opacity=".55"/><ellipse cx="31.5" cy="39.1" rx="0.7" ry="0.4" fill="#2a4a1c" opacity=".55"/><ellipse cx="49.8" cy="39.2" rx="1.5" ry="0.7" fill="#6cb84a" opacity=".55"/><ellipse cx="1.3" cy="41.8" rx="1.2" ry="0.7" fill="#87c85c" opacity=".55"/><ellipse cx="85.8" cy="38.2" rx="1.1" ry="0.7" fill="#87c85c" opacity=".55"/><ellipse cx="64.8" cy="45.2" rx="1.4" ry="0.4" fill="#87c85c" opacity=".55"/><ellipse cx="75.3" cy="39.4" rx="1.2" ry="0.7" fill="#87c85c" opacity=".55"/><ellipse cx="42.5" cy="28.7" rx="1.1" ry="0.7" fill="#3a7a2c" opacity=".55"/><ellipse cx="44.8" cy="29.3" rx="1.0" ry="0.7" fill="#3a7a2c" opacity=".55"/></g><rect width="90" height="48" filter="url(#tn9)" opacity="0.12"/></g></svg>
<svg style="left:543px;top:193px;" width="93" height="51" viewBox="0 0 93 51"><defs><clipPath id="tc10"><rect x="1" y="1" width="88" height="46" rx="3.500"/></clipPath><filter id="tb10" x="-5%" y="-5%" width="110%" height="110%"><feGaussianBlur stdDeviation="0.5"/></filter><filter id="tn10" x="0" y="0" width="100%" height="100%"><feTurbulence type="fractalNoise" baseFrequency=".45" numOctaves="2" seed="7"/><feColorMatrix type="matrix" values="0 0 0 0 0  0 0 0 0 0  0 0 0 0 0  0 0 0 1.400 -.5"/></filter></defs><rect x="1.500" y="1.500" width="90" height="48" fill="#000" opacity=".18"/><rect x="1" y="1" width="90" height="48" fill="#000" opacity=".14"/><rect width="90" height="48" fill="#050505"/><g clip-path="url(#tc10)"><g filter="url(#tb10)"><rect x="-4" y="-4" width="98" height="56" fill="#d0d8a0"/><rect x="-4" y="-4" width="98" height="18" fill="#eff1e6"/><circle cx="4.9" cy="4.1" r="1.5" fill="#6f8f4e" opacity=".9"/><circle cx="7.9" cy="3.7" r="1.4" fill="#86a463" opacity=".9"/><circle cx="3.2" cy="5.8" r="1.0" fill="#6f8f4e" opacity=".9"/><circle cx="6.3" cy="3.5" r="1.4" fill="#86a463" opacity=".9"/><circle cx="6.8" cy="6.8" r="1.0" fill="#94ae70" opacity=".9"/><circle cx="3.3" cy="4.5" r="1.4" fill="#86a463" opacity=".9"/><circle cx="4.7" cy="4.0" r="1.0" fill="#5c7a42" opacity=".9"/><circle cx="6.4" cy="7.4" r="1.0" fill="#86a463" opacity=".9"/><circle cx="5.2" cy="6.6" r="1.0" fill="#6f8f4e" opacity=".9"/><circle cx="6.7" cy="6.2" r="1.4" fill="#5c7a42" opacity=".9"/><circle cx="5.8" cy="8.9" r="1.2" fill="#86a463" opacity=".9"/><circle cx="7.8" cy="7.5" r="1.1" fill="#5c7a42" opacity=".9"/><circle cx="6.2" cy="8.6" r="1.6" fill="#5c7a42" opacity=".9"/><circle cx="6.7" cy="3.6" r="1.4" fill="#86a463" opacity=".9"/><circle cx="15.0" cy="4.0" r="1.3" fill="#6f8f4e" opacity=".9"/><circle cx="15.8" cy="3.7" r="1.4" fill="#5c7a42" opacity=".9"/><circle cx="13.4" cy="4.9" r="1.3" fill="#94ae70" opacity=".9"/><circle cx="12.3" cy="3.8" r="1.1" fill="#6f8f4e" opacity=".9"/><circle cx="12.2" cy="6.3" r="1.5" fill="#94ae70" opacity=".9"/><circle cx="13.1" cy="5.0" r="1.5" fill="#6f8f4e" opacity=".9"/><circle cx="15.8" cy="4.9" r="1.4" fill="#94ae70" opacity=".9"/><circle cx="12.2" cy="6.6" r="1.0" fill="#86a463" opacity=".9"/><circle cx="23.2" cy="10.5" r="1.3" fill="#86a463" opacity=".9"/><circle cx="23.6" cy="7.4" r="1.7" fill="#94ae70" opacity=".9"/><circle cx="26.9" cy="5.1" r="1.3" fill="#5c7a42" opacity=".9"/><circle cx="25.5" cy="6.0" r="1.1" fill="#6f8f4e" opacity=".9"/><circle cx="21.4" cy="4.7" r="1.1" fill="#94ae70" opacity=".9"/><circle cx="26.6" cy="4.3" r="1.2" fill="#86a463" opacity=".9"/><circle cx="23.4" cy="5.9" r="1.4" fill="#86a463" opacity=".9"/><circle cx="25.5" cy="7.1" r="1.5" fill="#6f8f4e" opacity=".9"/><circle cx="23.7" cy="10.1" r="1.8" fill="#94ae70" opacity=".9"/><circle cx="23.2" cy="6.1" r="1.3" fill="#94ae70" opacity=".9"/><circle cx="20.5" cy="3.4" r="1.1" fill="#86a463" opacity=".9"/><circle cx="20.9" cy="7.8" r="1.0" fill="#86a463" opacity=".9"/><circle cx="24.3" cy="10.8" r="1.5" fill="#6f8f4e" opacity=".9"/><circle cx="27.0" cy="8.0" r="1.0" fill="#5c7a42" opacity=".9"/><circle cx="27.6" cy="7.9" r="1.3" fill="#6f8f4e" opacity=".9"/><circle cx="26.8" cy="11.1" r="1.3" fill="#94ae70" opacity=".9"/><circle cx="28.9" cy="7.0" r="1.6" fill="#5c7a42" opacity=".9"/><circle cx="29.9" cy="10.5" r="1.4" fill="#86a463" opacity=".9"/><circle cx="32.7" cy="9.4" r="1.0" fill="#6f8f4e" opacity=".9"/><circle cx="31.5" cy="8.0" r="1.5" fill="#6f8f4e" opacity=".9"/><circle cx="31.2" cy="7.7" r="1.2" fill="#86a463" opacity=".9"/><circle cx="29.1" cy="7.5" r="1.4" fill="#5c7a42" opacity=".9"/><circle cx="30.8" cy="10.0" r="1.6" fill="#86a463" opacity=".9"/><circle cx="31.8" cy="11.3" r="1.6" fill="#86a463" opacity=".9"/><circle cx="35.2" cy="10.2" r="1.6" fill="#6f8f4e" opacity=".9"/><circle cx="38.7" cy="10.1" r="1.1" fill="#5c7a42" opacity=".9"/><circle cx="36.7" cy="13.0" r="1.8" fill="#5c7a42" opacity=".9"/><circle cx="34.5" cy="7.7" r="1.3" fill="#5c7a42" opacity=".9"/><circle cx="35.2" cy="11.0" r="1.7" fill="#6f8f4e" opacity=".9"/><circle cx="36.9" cy="11.2" r="1.6" fill="#6f8f4e" opacity=".9"/><circle cx="39.0" cy="7.9" r="1.2" fill="#86a463" opacity=".9"/><circle cx="36.9" cy="8.2" r="1.6" fill="#5c7a42" opacity=".9"/><circle cx="43.5" cy="12.1" r="1.5" fill="#94ae70" opacity=".9"/><circle cx="45.4" cy="12.1" r="1.6" fill="#86a463" opacity=".9"/><circle cx="49.0" cy="6.3" r="1.4" fill="#94ae70" opacity=".9"/><circle cx="47.8" cy="7.0" r="1.6" fill="#94ae70" opacity=".9"/><circle cx="46.9" cy="8.3" r="1.4" fill="#86a463" opacity=".9"/><circle cx="43.1" cy="11.1" r="1.6" fill="#6f8f4e" opacity=".9"/><circle cx="46.2" cy="12.0" r="1.3" fill="#86a463" opacity=".9"/><circle cx="48.0" cy="7.4" r="1.1" fill="#5c7a42" opacity=".9"/><circle cx="46.0" cy="10.9" r="1.2" fill="#94ae70" opacity=".9"/><circle cx="48.0" cy="6.5" r="1.6" fill="#94ae70" opacity=".9"/><circle cx="59.1" cy="9.4" r="1.4" fill="#86a463" opacity=".9"/><circle cx="58.2" cy="7.3" r="0.9" fill="#94ae70" opacity=".9"/><circle cx="59.9" cy="7.9" r="1.6" fill="#86a463" opacity=".9"/><circle cx="55.7" cy="6.9" r="1.6" fill="#6f8f4e" opacity=".9"/><circle cx="56.8" cy="7.3" r="1.4" fill="#6f8f4e" opacity=".9"/><circle cx="60.7" cy="3.9" r="1.1" fill="#6f8f4e" opacity=".9"/><circle cx="59.9" cy="7.2" r="1.4" fill="#6f8f4e" opacity=".9"/><circle cx="57.6" cy="8.0" r="1.4" fill="#86a463" opacity=".9"/><circle cx="59.3" cy="6.8" r="1.4" fill="#94ae70" opacity=".9"/><circle cx="58.1" cy="5.3" r="1.4" fill="#5c7a42" opacity=".9"/><circle cx="61.0" cy="10.0" r="1.1" fill="#94ae70" opacity=".9"/><circle cx="55.5" cy="4.3" r="1.3" fill="#6f8f4e" opacity=".9"/><circle cx="67.0" cy="9.8" r="1.1" fill="#5c7a42" opacity=".9"/><circle cx="67.7" cy="12.8" r="1.0" fill="#5c7a42" opacity=".9"/><circle cx="63.9" cy="12.7" r="1.8" fill="#86a463" opacity=".9"/><circle cx="67.5" cy="7.7" r="1.7" fill="#86a463" opacity=".9"/><circle cx="68.9" cy="12.3" r="1.0" fill="#94ae70" opacity=".9"/><circle cx="69.0" cy="9.6" r="1.3" fill="#5c7a42" opacity=".9"/><circle cx="64.9" cy="11.6" r="0.9" fill="#94ae70" opacity=".9"/><circle cx="65.6" cy="7.2" r="1.2" fill="#5c7a42" opacity=".9"/><circle cx="50.1" cy="7.3" r="1.8" fill="#86a463" opacity=".9"/><circle cx="53.8" cy="7.7" r="1.1" fill="#6f8f4e" opacity=".9"/><circle cx="53.2" cy="8.3" r="1.6" fill="#94ae70" opacity=".9"/><circle cx="52.8" cy="12.5" r="1.8" fill="#94ae70" opacity=".9"/><circle cx="47.2" cy="14.5" r="1.4" fill="#5c7a42" opacity=".9"/><circle cx="46.7" cy="7.3" r="1.5" fill="#94ae70" opacity=".9"/><circle cx="53.2" cy="9.1" r="0.9" fill="#6f8f4e" opacity=".9"/><circle cx="52.4" cy="7.5" r="1.7" fill="#6f8f4e" opacity=".9"/><circle cx="0.6" cy="8.9" r="0.9" fill="#94ae70" opacity=".9"/><circle cx="4.6" cy="9.8" r="1.0" fill="#86a463" opacity=".9"/><circle cx="4.6" cy="14.2" r="1.1" fill="#86a463" opacity=".9"/><circle cx="0.2" cy="10.1" r="1.2" fill="#86a463" opacity=".9"/><circle cx="0.7" cy="11.3" r="1.1" fill="#5c7a42" opacity=".9"/><circle cx="3.8" cy="14.4" r="0.9" fill="#6f8f4e" opacity=".9"/><circle cx="3.4" cy="11.6" r="1.1" fill="#94ae70" opacity=".9"/><circle cx="0.5" cy="10.9" r="1.5" fill="#94ae70" opacity=".9"/><circle cx="19.3" cy="11.4" r="1.7" fill="#5c7a42" opacity=".9"/><circle cx="19.5" cy="15.1" r="1.2" fill="#86a463" opacity=".9"/><circle cx="17.2" cy="9.7" r="0.9" fill="#86a463" opacity=".9"/><circle cx="14.1" cy="12.1" r="1.7" fill="#94ae70" opacity=".9"/><circle cx="15.3" cy="7.5" r="1.7" fill="#5c7a42" opacity=".9"/><circle cx="18.8" cy="12.6" r="0.9" fill="#86a463" opacity=".9"/><circle cx="15.3" cy="10.5" r="1.1" fill="#5c7a42" opacity=".9"/><circle cx="21.8" cy="11.4" r="1.1" fill="#5c7a42" opacity=".9"/><rect x="-4" y="12.500" width="78" height="2" fill="#7d9a5a" opacity=".8"/><path d="M76 -2h9l-1 15h-7z" fill="#6a8250"/><path d="M82.500 0h2v24h-2z" fill="#4a4e38"/><path d="M80 2h9v2h-9z" fill="#565a44"/><rect x="-4" y="14" width="98" height="16" fill="#cbd596"/><path d="M0 15.5h66" stroke="#aebb76" stroke-width=".9" stroke-dasharray="1.500 1.200" opacity=".9"/><path d="M0 18.1h66" stroke="#aebb76" stroke-width=".9" stroke-dasharray="1.500 1.200" opacity=".9"/><path d="M0 20.7h66" stroke="#aebb76" stroke-width=".9" stroke-dasharray="1.500 1.200" opacity=".9"/><path d="M0 23.3h66" stroke="#aebb76" stroke-width=".9" stroke-dasharray="1.500 1.200" opacity=".9"/><path d="M0 25.9h66" stroke="#aebb76" stroke-width=".9" stroke-dasharray="1.500 1.200" opacity=".9"/><path d="M-2 26h66v5h-66z" fill="#bccb78"/><path d="M-2 31l62-7 5 3-67 9z" fill="#c4a45c"/><path d="M-2 33l40-5 0 2-40 5z" fill="#b88c48" opacity=".7"/><path d="M-2 36l60-9 34 12v14h-94z" fill="#a6bab0"/><path d="M10 38l40-5 10 4-44 5z" fill="#b8cac4" opacity=".8"/><path d="M-2 41l30-2 50 3-80 3z" fill="#94aaa0" opacity=".8"/><path d="M-2 44.500h94v6h-94z" fill="#c4c68e"/><path d="M69 -2h7c0 3-1 6-3 10l-3 20c4 3 6 6 4 9l-30 1c0-5 10-9 18-10 1-12 3-23 7-30z" fill="#f6fafa"/><path d="M66 30l8-2 4 8-14 1z" fill="#ffffff"/><circle cx="52.5" cy="32.5" r="0.9" fill="#fff" opacity=".9"/><circle cx="48.5" cy="33.2" r="1.2" fill="#fff" opacity=".9"/><circle cx="53.4" cy="37.2" r="0.7" fill="#fff" opacity=".9"/><circle cx="70.5" cy="32.2" r="1.1" fill="#fff" opacity=".9"/><circle cx="57.8" cy="33.4" r="1.2" fill="#fff" opacity=".9"/><circle cx="48.5" cy="38.7" r="1.4" fill="#fff" opacity=".9"/><circle cx="50.7" cy="38.1" r="1.3" fill="#fff" opacity=".9"/><circle cx="63.9" cy="37.1" r="1.2" fill="#fff" opacity=".9"/><circle cx="60.8" cy="33.3" r="1.2" fill="#fff" opacity=".9"/><circle cx="50.3" cy="37.6" r="1.2" fill="#fff" opacity=".9"/><circle cx="61.4" cy="34.4" r="1.2" fill="#fff" opacity=".9"/><circle cx="61.2" cy="38.3" r="1.3" fill="#fff" opacity=".9"/><circle cx="63.1" cy="37.5" r="0.6" fill="#fff" opacity=".9"/><circle cx="66.6" cy="37.4" r="1.2" fill="#fff" opacity=".9"/><path d="M70 24c1-6 4-8 7-6s4 6 4 10l1 7-10 1c-2-4-3-8-2-12z" fill="#c47c2c"/><path d="M72 20l1 12M75 18l0 14M78 20l1 12" stroke="#e0a048" stroke-width=".8"/><path d="M80 14h12v25l-11-4z" fill="#b4c672"/></g><rect width="90" height="48" filter="url(#tn10)" opacity="0.08"/></g></svg>
<svg style="left:189px;top:325px;" width="93" height="51" viewBox="0 0 93 51"><defs><clipPath id="tc11"><rect x="1" y="1" width="88" height="46" rx="3.500"/></clipPath><filter id="tb11" x="-5%" y="-5%" width="110%" height="110%"><feGaussianBlur stdDeviation="0.6"/></filter><filter id="tn11" x="0" y="0" width="100%" height="100%"><feTurbulence type="fractalNoise" baseFrequency=".45" numOctaves="2" seed="9"/><feColorMatrix type="matrix" values="0 0 0 0 0  0 0 0 0 0  0 0 0 0 0  0 0 0 1.400 -.5"/></filter></defs><rect x="1.500" y="1.500" width="90" height="48" fill="#000" opacity=".18"/><rect x="1" y="1" width="90" height="48" fill="#000" opacity=".14"/><rect width="90" height="48" fill="#050505"/><g clip-path="url(#tc11)"><g filter="url(#tb11)"><rect x="-4" y="-4" width="98" height="56" fill="#161d42"/><path d="M-2 -2h17l4 30-4 22h-17z" fill="#23521f"/><ellipse cx="6.9" cy="16.5" rx="1.2" ry="1.7" fill="#5f9a4c" transform="rotate(-13 8 20)" opacity=".85"/><ellipse cx="6.9" cy="27.4" rx="1.5" ry="1.7" fill="#5f9a4c" transform="rotate(18 8 20)" opacity=".85"/><ellipse cx="1.9" cy="43.5" rx="2.5" ry="1.2" fill="#3f7a34" transform="rotate(-21 8 20)" opacity=".85"/><ellipse cx="0.9" cy="22.8" rx="2.5" ry="1.4" fill="#1c4418" transform="rotate(23 8 20)" opacity=".85"/><ellipse cx="14.1" cy="42.2" rx="1.3" ry="1.0" fill="#1c4418" transform="rotate(31 8 20)" opacity=".85"/><ellipse cx="12.1" cy="41.8" rx="1.6" ry="1.1" fill="#5f9a4c" transform="rotate(-24 8 20)" opacity=".85"/><ellipse cx="14.1" cy="40.3" rx="1.1" ry="1.2" fill="#1c4418" transform="rotate(-29 8 20)" opacity=".85"/><ellipse cx="3.0" cy="33.6" rx="2.4" ry="1.8" fill="#5f9a4c" transform="rotate(-30 8 20)" opacity=".85"/><ellipse cx="8.8" cy="41.1" rx="1.3" ry="0.8" fill="#5f9a4c" transform="rotate(-29 8 20)" opacity=".85"/><ellipse cx="14.6" cy="22.5" rx="1.9" ry="1.3" fill="#3f7a34" transform="rotate(-6 8 20)" opacity=".85"/><ellipse cx="5.8" cy="29.0" rx="1.1" ry="1.4" fill="#3f7a34" transform="rotate(35 8 20)" opacity=".85"/><ellipse cx="11.2" cy="0.9" rx="1.4" ry="1.5" fill="#3f7a34" transform="rotate(20 8 20)" opacity=".85"/><ellipse cx="11.5" cy="26.0" rx="1.1" ry="1.7" fill="#1c4418" transform="rotate(36 8 20)" opacity=".85"/><ellipse cx="3.0" cy="27.7" rx="1.1" ry="1.2" fill="#a0c890" transform="rotate(7 8 20)" opacity=".85"/><ellipse cx="12.2" cy="3.1" rx="1.6" ry="1.7" fill="#a0c890" transform="rotate(-11 8 20)" opacity=".85"/><ellipse cx="2.6" cy="8.3" rx="2.5" ry="1.5" fill="#1c4418" transform="rotate(24 8 20)" opacity=".85"/><ellipse cx="4.6" cy="19.4" rx="1.3" ry="1.2" fill="#7cb464" transform="rotate(25 8 20)" opacity=".85"/><ellipse cx="4.2" cy="12.4" rx="1.8" ry="0.9" fill="#1c4418" transform="rotate(22 8 20)" opacity=".85"/><ellipse cx="12.7" cy="22.4" rx="2.1" ry="1.0" fill="#5f9a4c" transform="rotate(-6 8 20)" opacity=".85"/><ellipse cx="2.9" cy="44.3" rx="1.6" ry="1.2" fill="#a0c890" transform="rotate(-10 8 20)" opacity=".85"/><ellipse cx="10.3" cy="7.0" rx="2.3" ry="1.1" fill="#5f9a4c" transform="rotate(35 8 20)" opacity=".85"/><ellipse cx="12.8" cy="11.4" rx="1.3" ry="0.9" fill="#3f7a34" transform="rotate(-39 8 20)" opacity=".85"/><ellipse cx="0.0" cy="8.8" rx="1.6" ry="1.4" fill="#7cb464" transform="rotate(-17 8 20)" opacity=".85"/><ellipse cx="7.2" cy="12.1" rx="2.5" ry="1.5" fill="#7cb464" transform="rotate(16 8 20)" opacity=".85"/><ellipse cx="0.1" cy="20.2" rx="2.1" ry="1.6" fill="#1c4418" transform="rotate(7 8 20)" opacity=".85"/><ellipse cx="12.6" cy="30.2" rx="1.4" ry="1.4" fill="#a0c890" transform="rotate(-0 8 20)" opacity=".85"/><path d="M14 -2h15l-6 19-6 5z" fill="#9a8f82"/><path d="M19 -1l3 0-4 17-2 1z" fill="#5c5048"/><path d="M24 -1l2 0-3 12z" fill="#6e6258"/><path d="M16.500 17h6l3 24h-7z" fill="#3c5ca8"/><path d="M29 -2h16l-2 16 6 7-4 14-20 3c-3-6-3-13 1-21z" fill="#e8ba98"/><path d="M31 0l6 0-2 14-8 8z" fill="#d8a484" opacity=".7"/><path d="M28 22c4-3 10-4 16-2l-2 8-14 4z" fill="#f2cdb0"/><path d="M90 -2h-15l-13 17c0 8 4 18 10 24l6-2c2-8 8-22 12-39z" fill="#e5b590"/><path d="M64 20c4-2 8-2 12 2l-4 14c-4-4-7-10-8-16z" fill="#f0c8aa"/><path d="M60.500 11.500c6-2.500 12.500.5 15.500 7.500l-2 4c-3-6-8-9-14.500-8z" fill="#c43a26"/><path d="M62 12c5-1 10 1 13 6" stroke="#e0685a" stroke-width=".8" fill="none"/><path d="M77 13l15-5v28l-19 3z" fill="#18204c"/><path d="M78 30l14-8v6l-16 8z" fill="#2c3a78" opacity=".8"/><path d="M-2 28c8 2 16-2 24-8 6-4 12-4 18 0 6-6 12-8 18-4 8 4 12 12 14 20l20 6v10h-94z" fill="#3a8828"/><ellipse cx="47.7" cy="21.7" rx="1.6" ry="1.1" fill="#2c7422" transform="rotate(113 47.7 21.7)"/><ellipse cx="44.4" cy="33.0" rx="1.6" ry="0.9" fill="#4ea034" transform="rotate(98 44.4 33.0)"/><ellipse cx="72.8" cy="31.5" rx="1.5" ry="1.2" fill="#1f5a1a" transform="rotate(169 72.8 31.5)"/><ellipse cx="48.7" cy="31.1" rx="3.0" ry="0.6" fill="#a8dc7c" transform="rotate(97 48.7 31.1)"/><ellipse cx="50.4" cy="42.8" rx="1.9" ry="0.7" fill="#6cbc44" transform="rotate(12 50.4 42.8)"/><ellipse cx="58.0" cy="29.2" rx="2.6" ry="0.6" fill="#4ea034" transform="rotate(88 58.0 29.2)"/><ellipse cx="43.5" cy="27.0" rx="2.5" ry="0.9" fill="#2c7422" transform="rotate(173 43.5 27.0)"/><ellipse cx="18.2" cy="33.1" rx="2.7" ry="0.8" fill="#6cbc44" transform="rotate(110 18.2 33.1)"/><ellipse cx="48.8" cy="29.8" rx="1.6" ry="0.7" fill="#8cd05c" transform="rotate(127 48.8 29.8)"/><ellipse cx="51.4" cy="43.4" rx="2.9" ry="0.7" fill="#8cd05c" transform="rotate(178 51.4 43.4)"/><ellipse cx="56.3" cy="29.2" rx="3.1" ry="0.7" fill="#6cbc44" transform="rotate(23 56.3 29.2)"/><ellipse cx="74.6" cy="27.1" rx="2.3" ry="0.9" fill="#8cd05c" transform="rotate(133 74.6 27.1)"/><ellipse cx="31.2" cy="33.5" rx="2.4" ry="0.9" fill="#8cd05c" transform="rotate(173 31.2 33.5)"/><ellipse cx="44.5" cy="25.5" rx="2.6" ry="1.0" fill="#2c7422" transform="rotate(157 44.5 25.5)"/><ellipse cx="34.0" cy="38.6" rx="2.8" ry="1.1" fill="#6cbc44" transform="rotate(176 34.0 38.6)"/><ellipse cx="35.1" cy="23.7" rx="2.3" ry="0.8" fill="#1f5a1a" transform="rotate(109 35.1 23.7)"/><ellipse cx="41.8" cy="19.1" rx="2.3" ry="1.2" fill="#1f5a1a" transform="rotate(54 41.8 19.1)"/><ellipse cx="42.4" cy="22.0" rx="2.1" ry="0.7" fill="#4ea034" transform="rotate(72 42.4 22.0)"/><ellipse cx="37.9" cy="41.2" rx="1.6" ry="1.2" fill="#4ea034" transform="rotate(170 37.9 41.2)"/><ellipse cx="52.0" cy="42.4" rx="2.2" ry="1.0" fill="#8cd05c" transform="rotate(121 52.0 42.4)"/><ellipse cx="41.3" cy="23.1" rx="2.8" ry="1.1" fill="#4ea034" transform="rotate(131 41.3 23.1)"/><ellipse cx="33.1" cy="31.4" rx="1.5" ry="1.2" fill="#6cbc44" transform="rotate(13 33.1 31.4)"/><ellipse cx="21.5" cy="25.9" rx="2.4" ry="1.1" fill="#1f5a1a" transform="rotate(125 21.5 25.9)"/><ellipse cx="55.0" cy="27.7" rx="2.4" ry="0.7" fill="#a8dc7c" transform="rotate(160 55.0 27.7)"/><ellipse cx="37.4" cy="42.6" rx="3.1" ry="0.9" fill="#4ea034" transform="rotate(36 37.4 42.6)"/><ellipse cx="62.6" cy="21.8" rx="2.0" ry="1.1" fill="#8cd05c" transform="rotate(31 62.6 21.8)"/><ellipse cx="44.7" cy="40.4" rx="3.0" ry="1.1" fill="#8cd05c" transform="rotate(122 44.7 40.4)"/><ellipse cx="33.1" cy="31.0" rx="3.2" ry="0.7" fill="#2c7422" transform="rotate(86 33.1 31.0)"/><ellipse cx="60.9" cy="26.4" rx="2.4" ry="1.2" fill="#6cbc44" transform="rotate(108 60.9 26.4)"/><ellipse cx="50.7" cy="31.5" rx="2.8" ry="0.9" fill="#8cd05c" transform="rotate(171 50.7 31.5)"/><ellipse cx="28.6" cy="31.7" rx="1.9" ry="0.7" fill="#a8dc7c" transform="rotate(162 28.6 31.7)"/><ellipse cx="50.1" cy="17.3" rx="1.6" ry="1.1" fill="#8cd05c" transform="rotate(100 50.1 17.3)"/><ellipse cx="45.8" cy="18.6" rx="2.2" ry="0.9" fill="#a8dc7c" transform="rotate(145 45.8 18.6)"/><ellipse cx="59.6" cy="22.1" rx="1.8" ry="1.0" fill="#8cd05c" transform="rotate(18 59.6 22.1)"/><ellipse cx="31.6" cy="23.7" rx="2.4" ry="1.1" fill="#6cbc44" transform="rotate(85 31.6 23.7)"/><ellipse cx="72.0" cy="31.6" rx="3.2" ry="0.7" fill="#6cbc44" transform="rotate(121 72.0 31.6)"/><ellipse cx="59.0" cy="32.8" rx="2.6" ry="0.8" fill="#a8dc7c" transform="rotate(175 59.0 32.8)"/><ellipse cx="23.8" cy="25.0" rx="2.2" ry="1.1" fill="#1f5a1a" transform="rotate(6 23.8 25.0)"/><ellipse cx="43.9" cy="35.8" rx="2.9" ry="1.1" fill="#a8dc7c" transform="rotate(57 43.9 35.8)"/><ellipse cx="28.0" cy="35.0" rx="2.5" ry="1.1" fill="#4ea034" transform="rotate(94 28.0 35.0)"/><ellipse cx="25.1" cy="27.2" rx="2.2" ry="0.8" fill="#1f5a1a" transform="rotate(173 25.1 27.2)"/><ellipse cx="60.9" cy="39.6" rx="2.5" ry="0.9" fill="#1f5a1a" transform="rotate(120 60.9 39.6)"/><ellipse cx="47.2" cy="23.9" rx="3.1" ry="0.8" fill="#6cbc44" transform="rotate(110 47.2 23.9)"/><path d="M27 38c2 2 5 2 7 0l2 4c-3 2-7 1-9-1zM45 40c3 2 6 2 8 0l2 3c-3 2-8 2-10 0zM52 41c3 1 6 1 8-1l2 3c-3 2-8 2-10 0zM62 42c2 1 5 0 6-2l2 3c-2 2-6 2-8 1z" fill="#e8b494"/><path d="M-2 36l18 6 10 10h-28zM62 46l30-10v16h-36z" fill="#1c4e1a"/><ellipse cx="57.9" cy="43.7" rx="2.4" ry="0.7" fill="#3f8a30" opacity=".8"/><ellipse cx="17.0" cy="45.8" rx="1.4" ry="0.8" fill="#3f8a30" opacity=".8"/><ellipse cx="15.2" cy="45.1" rx="2.4" ry="0.8" fill="#62a84c" opacity=".8"/><ellipse cx="30.7" cy="44.5" rx="1.2" ry="1.0" fill="#3f8a30" opacity=".8"/><ellipse cx="66.5" cy="41.7" rx="1.1" ry="0.6" fill="#62a84c" opacity=".8"/><ellipse cx="38.9" cy="42.8" rx="2.2" ry="1.1" fill="#3f8a30" opacity=".8"/><ellipse cx="63.2" cy="45.7" rx="2.4" ry="0.6" fill="#62a84c" opacity=".8"/><ellipse cx="13.1" cy="44.6" rx="1.6" ry="1.0" fill="#3f8a30" opacity=".8"/><ellipse cx="80.6" cy="42.8" rx="1.8" ry="1.1" fill="#3f8a30" opacity=".8"/><ellipse cx="13.7" cy="44.4" rx="1.4" ry="0.8" fill="#16401a" opacity=".8"/><ellipse cx="71.6" cy="44.3" rx="2.1" ry="0.7" fill="#16401a" opacity=".8"/><ellipse cx="73.7" cy="45.4" rx="1.3" ry="0.8" fill="#16401a" opacity=".8"/><ellipse cx="33.1" cy="47.9" rx="2.2" ry="0.9" fill="#62a84c" opacity=".8"/><ellipse cx="15.6" cy="45.2" rx="2.2" ry="1.0" fill="#16401a" opacity=".8"/><ellipse cx="44.0" cy="42.5" rx="1.1" ry="0.8" fill="#3f8a30" opacity=".8"/><ellipse cx="87.6" cy="47.7" rx="2.5" ry="0.7" fill="#3f8a30" opacity=".8"/><ellipse cx="21.0" cy="45.7" rx="1.8" ry="1.0" fill="#3f8a30" opacity=".8"/><ellipse cx="17.3" cy="44.9" rx="1.6" ry="0.8" fill="#3f8a30" opacity=".8"/><ellipse cx="87.5" cy="40.6" rx="1.8" ry="0.8" fill="#62a84c" opacity=".8"/><ellipse cx="37.3" cy="41.5" rx="1.5" ry="0.8" fill="#62a84c" opacity=".8"/></g><rect width="90" height="48" filter="url(#tn11)" opacity="0.1"/></g></svg>
<svg style="left:307px;top:325px;" width="93" height="51" viewBox="0 0 93 51"><defs><clipPath id="tc12"><rect x="1" y="1" width="88" height="46" rx="3.500"/></clipPath><filter id="tb12" x="-5%" y="-5%" width="110%" height="110%"><feGaussianBlur stdDeviation="0.5"/></filter><filter id="tn12" x="0" y="0" width="100%" height="100%"><feTurbulence type="fractalNoise" baseFrequency=".45" numOctaves="2" seed="11"/><feColorMatrix type="matrix" values="0 0 0 0 0  0 0 0 0 0  0 0 0 0 0  0 0 0 1.400 -.5"/></filter><linearGradient id="h5s" x1="0" y1="0" x2="0" y2="1"><stop offset="0" stop-color="#f3f2f7"/><stop offset="1" stop-color="#d6dae2"/></linearGradient><linearGradient id="h5f" x1="0" y1="0" x2="0" y2="1"><stop offset="0" stop-color="#c8ba34"/><stop offset=".3" stop-color="#9ea432"/><stop offset=".7" stop-color="#66782a"/><stop offset="1" stop-color="#32461e"/></linearGradient></defs><rect x="1.500" y="1.500" width="90" height="48" fill="#000" opacity=".18"/><rect x="1" y="1" width="90" height="48" fill="#000" opacity=".14"/><rect width="90" height="48" fill="#050505"/><g clip-path="url(#tc12)"><g filter="url(#tb12)"><rect x="-4" y="-4" width="98" height="22" fill="url(#h5s)"/><path d="M-2 8c6-1 14 0 20 2l3 3c3-2 6-2 8 0l12 0 50-1v6h-93z" fill="#70828c"/><path d="M-2 8c6-1 14 0 20 2l2 8h-22z" fill="#54685e"/><path d="M21 14h70v3h-70z" fill="#62747c" opacity=".7"/><rect x="-4" y="16.500" width="98" height="2.500" fill="#b6c2a6"/><rect x="-4" y="19" width="98" height="20" fill="url(#h5f)"/><rect x="-1.0" y="25.2" width="1.3" height="12.3" fill="#3c5020" opacity=".6"/><rect x="0.7" y="25.0" width="1.1" height="14.0" fill="#2f4018" opacity=".6"/><rect x="3.0" y="23.6" width="1.0" height="14.5" fill="#2f4018" opacity=".6"/><rect x="5.1" y="24.6" width="1.0" height="13.7" fill="#3c5020" opacity=".6"/><rect x="7.1" y="26.3" width="0.7" height="10.2" fill="#3c5020" opacity=".6"/><rect x="9.1" y="26.1" width="0.9" height="13.0" fill="#3c5020" opacity=".6"/><rect x="11.0" y="25.6" width="1.0" height="13.3" fill="#7a8c2c" opacity=".6"/><rect x="13.1" y="24.6" width="1.0" height="14.7" fill="#2f4018" opacity=".6"/><rect x="15.2" y="24.3" width="0.8" height="11.4" fill="#2f4018" opacity=".6"/><rect x="17.1" y="23.4" width="0.8" height="11.5" fill="#2f4018" opacity=".6"/><rect x="19.4" y="26.4" width="0.7" height="11.0" fill="#2f4018" opacity=".6"/><rect x="21.0" y="26.9" width="0.9" height="10.4" fill="#3c5020" opacity=".6"/><rect x="23.2" y="24.1" width="0.8" height="11.7" fill="#7a8c2c" opacity=".6"/><rect x="25.2" y="23.5" width="0.8" height="10.5" fill="#2f4018" opacity=".6"/><rect x="27.0" y="24.9" width="1.1" height="10.9" fill="#3c5020" opacity=".6"/><rect x="29.4" y="26.1" width="1.0" height="11.9" fill="#7a8c2c" opacity=".6"/><rect x="30.9" y="23.9" width="0.9" height="14.9" fill="#c4c040" opacity=".6"/><rect x="33.4" y="23.1" width="0.8" height="15.0" fill="#2f4018" opacity=".6"/><rect x="34.6" y="23.6" width="1.0" height="10.0" fill="#c4c040" opacity=".6"/><rect x="37.3" y="24.5" width="0.7" height="11.0" fill="#3c5020" opacity=".6"/><rect x="38.6" y="24.5" width="1.1" height="10.6" fill="#7a8c2c" opacity=".6"/><rect x="41.3" y="23.5" width="0.9" height="13.1" fill="#c4c040" opacity=".6"/><rect x="43.3" y="26.3" width="0.8" height="10.9" fill="#3c5020" opacity=".6"/><rect x="45.1" y="24.6" width="1.0" height="10.4" fill="#2f4018" opacity=".6"/><rect x="46.7" y="23.2" width="1.3" height="11.2" fill="#7a8c2c" opacity=".6"/><rect x="48.8" y="26.3" width="1.1" height="11.5" fill="#3c5020" opacity=".6"/><rect x="51.3" y="26.9" width="0.8" height="12.4" fill="#2f4018" opacity=".6"/><rect x="52.8" y="26.7" width="0.8" height="10.1" fill="#c4c040" opacity=".6"/><rect x="54.9" y="24.0" width="0.7" height="11.4" fill="#3c5020" opacity=".6"/><rect x="56.7" y="23.6" width="1.0" height="11.7" fill="#3c5020" opacity=".6"/><rect x="59.1" y="26.7" width="1.0" height="11.8" fill="#c4c040" opacity=".6"/><rect x="61.4" y="23.1" width="1.1" height="12.4" fill="#c4c040" opacity=".6"/><rect x="62.9" y="27.0" width="0.7" height="12.7" fill="#2f4018" opacity=".6"/><rect x="65.3" y="25.9" width="1.1" height="14.0" fill="#c4c040" opacity=".6"/><rect x="66.9" y="25.7" width="1.2" height="14.4" fill="#7a8c2c" opacity=".6"/><rect x="69.4" y="23.1" width="1.0" height="10.1" fill="#7a8c2c" opacity=".6"/><rect x="70.9" y="23.0" width="0.7" height="10.5" fill="#2f4018" opacity=".6"/><rect x="73.4" y="26.5" width="1.1" height="11.9" fill="#7a8c2c" opacity=".6"/><rect x="75.0" y="26.4" width="0.8" height="13.8" fill="#2f4018" opacity=".6"/><rect x="76.8" y="23.4" width="0.7" height="14.8" fill="#2f4018" opacity=".6"/><rect x="79.0" y="25.5" width="1.3" height="11.3" fill="#2f4018" opacity=".6"/><rect x="80.9" y="23.6" width="1.1" height="12.6" fill="#c4c040" opacity=".6"/><rect x="83.1" y="24.8" width="1.2" height="11.6" fill="#c4c040" opacity=".6"/><rect x="84.8" y="24.7" width="1.2" height="14.6" fill="#3c5020" opacity=".6"/><rect x="86.9" y="25.3" width="0.9" height="10.7" fill="#7a8c2c" opacity=".6"/><rect x="88.9" y="26.6" width="0.7" height="10.3" fill="#c4c040" opacity=".6"/><ellipse cx="74.0" cy="20.0" rx="1.7" ry=".7" fill="#d8c83c" opacity=".8"/><ellipse cx="74.8" cy="21.2" rx="1.8" ry=".7" fill="#e0d458" opacity=".8"/><ellipse cx="28.4" cy="23.3" rx="2.5" ry=".7" fill="#b0a830" opacity=".8"/><ellipse cx="28.8" cy="23.2" rx="1.4" ry=".7" fill="#e0d458" opacity=".8"/><ellipse cx="3.7" cy="22.7" rx="1.9" ry=".7" fill="#b0a830" opacity=".8"/><ellipse cx="58.4" cy="22.0" rx="2.0" ry=".7" fill="#b0a830" opacity=".8"/><ellipse cx="40.9" cy="19.6" rx="2.2" ry=".7" fill="#d8c83c" opacity=".8"/><ellipse cx="70.1" cy="23.1" rx="2.5" ry=".7" fill="#d8c83c" opacity=".8"/><ellipse cx="40.2" cy="22.3" rx="2.0" ry=".7" fill="#b0a830" opacity=".8"/><ellipse cx="86.3" cy="22.6" rx="1.3" ry=".7" fill="#b0a830" opacity=".8"/><ellipse cx="23.0" cy="22.7" rx="2.1" ry=".7" fill="#e0d458" opacity=".8"/><ellipse cx="64.3" cy="20.3" rx="1.4" ry=".7" fill="#b0a830" opacity=".8"/><ellipse cx="48.6" cy="23.8" rx="1.8" ry=".7" fill="#d8c83c" opacity=".8"/><ellipse cx="35.4" cy="23.1" rx="2.4" ry=".7" fill="#d8c83c" opacity=".8"/><ellipse cx="36.9" cy="23.5" rx="1.6" ry=".7" fill="#b0a830" opacity=".8"/><ellipse cx="40.8" cy="22.3" rx="2.4" ry=".7" fill="#b0a830" opacity=".8"/><ellipse cx="49.5" cy="22.4" rx="1.8" ry=".7" fill="#b0a830" opacity=".8"/><ellipse cx="41.7" cy="22.4" rx="1.3" ry=".7" fill="#e0d458" opacity=".8"/><ellipse cx="78.0" cy="23.1" rx="2.4" ry=".7" fill="#d8c83c" opacity=".8"/><ellipse cx="19.2" cy="23.5" rx="2.5" ry=".7" fill="#b0a830" opacity=".8"/><ellipse cx="48.3" cy="23.1" rx="1.5" ry=".7" fill="#e0d458" opacity=".8"/><ellipse cx="77.0" cy="21.1" rx="1.1" ry=".7" fill="#b0a830" opacity=".8"/><ellipse cx="30.8" cy="21.4" rx="1.4" ry=".7" fill="#d8c83c" opacity=".8"/><ellipse cx="19.6" cy="23.4" rx="1.6" ry=".7" fill="#d8c83c" opacity=".8"/><ellipse cx="15.6" cy="21.0" rx="2.2" ry=".7" fill="#d8c83c" opacity=".8"/><ellipse cx="42.4" cy="24.0" rx="2.4" ry=".7" fill="#e0d458" opacity=".8"/><ellipse cx="75.6" cy="22.6" rx="2.4" ry=".7" fill="#b0a830" opacity=".8"/><ellipse cx="52.1" cy="22.6" rx="2.1" ry=".7" fill="#b0a830" opacity=".8"/><ellipse cx="47.4" cy="20.8" rx="2.1" ry=".7" fill="#e0d458" opacity=".8"/><ellipse cx="14.8" cy="21.8" rx="2.4" ry=".7" fill="#b0a830" opacity=".8"/><path d="M36 26l3-4 3 16h-8z" fill="#284420" opacity=".9"/><path d="M42 20l2 0 3 8h-4z" fill="#465622" opacity=".7"/><path d="M39 19l2 0 2 4h-3z" fill="#e4dc9c" opacity=".6"/><rect x="-4" y="37.500" width="98" height="3.500" fill="#2c401a"/><rect x="-4" y="40.500" width="98" height="10" fill="#4a6a38"/><rect x="-4" y="42" width="98" height="2" fill="#5a7a44" opacity=".7"/></g><rect width="90" height="48" filter="url(#tn12)" opacity="0.1"/></g></svg>
<svg style="left:425px;top:325px;" width="93" height="51" viewBox="0 0 93 51"><defs><clipPath id="tc13"><rect x="1" y="1" width="88" height="46" rx="3.500"/></clipPath><filter id="tb13" x="-5%" y="-5%" width="110%" height="110%"><feGaussianBlur stdDeviation="0.5"/></filter><filter id="tn13" x="0" y="0" width="100%" height="100%"><feTurbulence type="fractalNoise" baseFrequency=".45" numOctaves="2" seed="13"/><feColorMatrix type="matrix" values="0 0 0 0 0  0 0 0 0 0  0 0 0 0 0  0 0 0 1.400 -.5"/></filter></defs><rect x="1.500" y="1.500" width="90" height="48" fill="#000" opacity=".18"/><rect x="1" y="1" width="90" height="48" fill="#000" opacity=".14"/><rect width="90" height="48" fill="#050505"/><g clip-path="url(#tc13)"><g filter="url(#tb13)"><rect x="-4" y="-4" width="98" height="56" fill="#b49088"/><rect x="-4" y="-4" width="98" height="12" fill="#e9e9e1"/><circle cx="13.7" cy="2.9" r="1.1" fill="#737a64" opacity=".9"/><circle cx="13.0" cy="2.6" r="1.2" fill="#4a5242" opacity=".9"/><circle cx="16.5" cy="5.8" r="1.0" fill="#4a5242" opacity=".9"/><circle cx="13.9" cy="3.2" r="0.9" fill="#737a64" opacity=".9"/><circle cx="17.2" cy="2.6" r="1.3" fill="#4a5242" opacity=".9"/><circle cx="16.5" cy="3.3" r="1.0" fill="#4a5242" opacity=".9"/><circle cx="12.9" cy="5.1" r="1.3" fill="#737a64" opacity=".9"/><circle cx="13.4" cy="4.5" r="0.9" fill="#4a5242" opacity=".9"/><circle cx="12.5" cy="3.7" r="1.4" fill="#4a5242" opacity=".9"/><circle cx="16.7" cy="4.7" r="1.1" fill="#4a5242" opacity=".9"/><circle cx="25.7" cy="4.5" r="1.0" fill="#5c6450" opacity=".9"/><circle cx="24.3" cy="5.6" r="1.6" fill="#868c78" opacity=".9"/><circle cx="26.8" cy="4.5" r="1.3" fill="#5c6450" opacity=".9"/><circle cx="25.7" cy="4.7" r="1.3" fill="#4a5242" opacity=".9"/><circle cx="24.7" cy="5.5" r="1.3" fill="#737a64" opacity=".9"/><circle cx="27.6" cy="4.3" r="0.8" fill="#737a64" opacity=".9"/><circle cx="25.1" cy="6.0" r="1.5" fill="#5c6450" opacity=".9"/><circle cx="25.3" cy="4.6" r="1.2" fill="#5c6450" opacity=".9"/><circle cx="45.1" cy="3.4" r="1.6" fill="#4a5242" opacity=".9"/><circle cx="47.4" cy="7.9" r="0.8" fill="#4a5242" opacity=".9"/><circle cx="44.9" cy="3.8" r="1.3" fill="#5c6450" opacity=".9"/><circle cx="44.8" cy="4.0" r="1.2" fill="#737a64" opacity=".9"/><circle cx="44.5" cy="6.1" r="0.9" fill="#5c6450" opacity=".9"/><circle cx="45.2" cy="5.3" r="1.1" fill="#4a5242" opacity=".9"/><circle cx="49.0" cy="5.9" r="1.2" fill="#737a64" opacity=".9"/><circle cx="45.5" cy="4.1" r="0.8" fill="#5c6450" opacity=".9"/><circle cx="47.4" cy="6.0" r="1.6" fill="#5c6450" opacity=".9"/><circle cx="46.3" cy="6.0" r="1.1" fill="#5c6450" opacity=".9"/><circle cx="43.7" cy="5.7" r="1.4" fill="#868c78" opacity=".9"/><circle cx="46.9" cy="4.0" r="1.0" fill="#868c78" opacity=".9"/><circle cx="51.6" cy="6.1" r="1.1" fill="#737a64" opacity=".9"/><circle cx="52.6" cy="7.5" r="1.0" fill="#737a64" opacity=".9"/><circle cx="50.1" cy="6.9" r="1.0" fill="#737a64" opacity=".9"/><circle cx="53.1" cy="7.4" r="1.0" fill="#4a5242" opacity=".9"/><circle cx="50.2" cy="9.2" r="1.3" fill="#868c78" opacity=".9"/><circle cx="53.9" cy="8.2" r="1.5" fill="#5c6450" opacity=".9"/><circle cx="63.0" cy="2.9" r="1.0" fill="#737a64" opacity=".9"/><circle cx="62.2" cy="5.3" r="1.4" fill="#4a5242" opacity=".9"/><circle cx="64.6" cy="4.7" r="1.3" fill="#4a5242" opacity=".9"/><circle cx="62.2" cy="4.2" r="1.2" fill="#4a5242" opacity=".9"/><circle cx="65.3" cy="5.3" r="0.8" fill="#737a64" opacity=".9"/><circle cx="64.3" cy="3.6" r="1.5" fill="#737a64" opacity=".9"/><circle cx="63.9" cy="4.5" r="1.2" fill="#868c78" opacity=".9"/><circle cx="65.1" cy="3.4" r="0.8" fill="#737a64" opacity=".9"/><circle cx="60.6" cy="6.2" r="0.9" fill="#868c78" opacity=".9"/><circle cx="64.9" cy="4.8" r="1.5" fill="#737a64" opacity=".9"/><circle cx="68.6" cy="4.1" r="1.5" fill="#868c78" opacity=".9"/><circle cx="71.7" cy="3.5" r="0.9" fill="#5c6450" opacity=".9"/><circle cx="70.0" cy="4.9" r="1.3" fill="#737a64" opacity=".9"/><circle cx="68.2" cy="2.3" r="1.5" fill="#5c6450" opacity=".9"/><circle cx="69.2" cy="3.2" r="0.9" fill="#868c78" opacity=".9"/><circle cx="69.5" cy="4.7" r="1.0" fill="#737a64" opacity=".9"/><circle cx="71.0" cy="4.9" r="1.1" fill="#5c6450" opacity=".9"/><circle cx="68.5" cy="4.1" r="1.5" fill="#868c78" opacity=".9"/><circle cx="7.7" cy="7.4" r="1.2" fill="#737a64" opacity=".9"/><circle cx="8.5" cy="8.2" r="1.2" fill="#5c6450" opacity=".9"/><circle cx="9.2" cy="5.6" r="1.5" fill="#737a64" opacity=".9"/><circle cx="8.8" cy="6.1" r="1.5" fill="#4a5242" opacity=".9"/><circle cx="8.2" cy="8.1" r="1.4" fill="#5c6450" opacity=".9"/><circle cx="34.6" cy="6.4" r="0.9" fill="#868c78" opacity=".9"/><circle cx="34.1" cy="7.8" r="1.1" fill="#4a5242" opacity=".9"/><circle cx="33.4" cy="8.6" r="1.6" fill="#5c6450" opacity=".9"/><circle cx="34.7" cy="8.1" r="1.1" fill="#868c78" opacity=".9"/><circle cx="35.1" cy="7.9" r="1.5" fill="#868c78" opacity=".9"/><circle cx="80.7" cy="7.3" r="0.9" fill="#4a5242" opacity=".9"/><circle cx="82.9" cy="6.7" r="1.1" fill="#737a64" opacity=".9"/><circle cx="81.1" cy="8.2" r="1.0" fill="#4a5242" opacity=".9"/><circle cx="78.2" cy="9.0" r="1.3" fill="#5c6450" opacity=".9"/><circle cx="77.5" cy="8.3" r="1.5" fill="#4a5242" opacity=".9"/><circle cx="80.9" cy="6.7" r="1.0" fill="#5c6450" opacity=".9"/><circle cx="80.6" cy="7.7" r="1.4" fill="#5c6450" opacity=".9"/><circle cx="81.8" cy="9.1" r="1.6" fill="#737a64" opacity=".9"/><circle cx="86.1" cy="11.0" r="1.3" fill="#5c6450" opacity=".9"/><circle cx="89.6" cy="10.9" r="0.9" fill="#868c78" opacity=".9"/><circle cx="89.1" cy="9.8" r="1.3" fill="#4a5242" opacity=".9"/><circle cx="90.1" cy="9.5" r="1.5" fill="#737a64" opacity=".9"/><circle cx="90.4" cy="9.6" r="1.0" fill="#737a64" opacity=".9"/><circle cx="89.5" cy="8.7" r="1.2" fill="#868c78" opacity=".9"/><path d="M-2 8l40 1 54 5v5l-94-6z" fill="#8a8652" opacity=".85"/><path d="M56 10l36 3v6l-36-5z" fill="#6c4c34" opacity=".75"/><path d="M-2 11l94 6v10l-94-4z" fill="#ccaca4"/><ellipse cx="34.8" cy="43.7" rx="4.3" ry="1.4" fill="#c46690" opacity=".9"/><ellipse cx="52.1" cy="28.9" rx="1.8" ry="1.0" fill="#d8809e" opacity=".9"/><ellipse cx="54.6" cy="37.1" rx="2.7" ry="1.2" fill="#80604a" opacity=".9"/><ellipse cx="45.0" cy="15.4" rx="1.3" ry="0.6" fill="#a89080" opacity=".9"/><ellipse cx="53.5" cy="44.4" rx="4.2" ry="1.8" fill="#d8809e" opacity=".9"/><ellipse cx="56.9" cy="30.4" rx="2.8" ry="1.2" fill="#a89080" opacity=".9"/><ellipse cx="19.9" cy="18.6" rx="1.1" ry="0.5" fill="#d8809e" opacity=".9"/><ellipse cx="51.5" cy="27.6" rx="2.3" ry="1.0" fill="#e8c8cc" opacity=".9"/><ellipse cx="20.6" cy="14.3" rx="0.9" ry="0.6" fill="#c8507e" opacity=".9"/><ellipse cx="22.9" cy="16.5" rx="1.3" ry="0.6" fill="#d8809e" opacity=".9"/><ellipse cx="11.7" cy="19.2" rx="1.8" ry="0.8" fill="#c46690" opacity=".9"/><ellipse cx="49.5" cy="37.9" rx="3.3" ry="1.4" fill="#e4b4c4" opacity=".9"/><ellipse cx="12.2" cy="30.3" rx="2.3" ry="0.9" fill="#d8809e" opacity=".9"/><ellipse cx="78.5" cy="20.9" rx="1.4" ry="0.7" fill="#d8809e" opacity=".9"/><ellipse cx="34.9" cy="24.1" rx="1.7" ry="0.8" fill="#7d8a4c" opacity=".9"/><ellipse cx="78.7" cy="16.5" rx="0.9" ry="0.6" fill="#e4b4c4" opacity=".9"/><ellipse cx="8.7" cy="16.2" rx="1.0" ry="0.6" fill="#e4b4c4" opacity=".9"/><ellipse cx="64.1" cy="30.3" rx="2.7" ry="1.0" fill="#7d8a4c" opacity=".9"/><ellipse cx="78.0" cy="38.6" rx="2.7" ry="1.2" fill="#c46690" opacity=".9"/><ellipse cx="15.3" cy="31.3" rx="2.6" ry="1.3" fill="#a89080" opacity=".9"/><ellipse cx="57.5" cy="24.7" rx="1.9" ry="0.7" fill="#c46690" opacity=".9"/><ellipse cx="21.5" cy="34.8" rx="3.1" ry="1.2" fill="#d8809e" opacity=".9"/><ellipse cx="72.3" cy="41.7" rx="3.9" ry="1.8" fill="#c8507e" opacity=".9"/><ellipse cx="58.6" cy="43.3" rx="3.5" ry="1.6" fill="#e4b4c4" opacity=".9"/><ellipse cx="30.5" cy="46.6" rx="2.9" ry="1.3" fill="#c8507e" opacity=".9"/><ellipse cx="74.1" cy="31.8" rx="1.7" ry="1.2" fill="#f2e2dc" opacity=".9"/><ellipse cx="53.4" cy="25.6" rx="2.1" ry="0.7" fill="#7d8a4c" opacity=".9"/><ellipse cx="74.1" cy="46.3" rx="4.3" ry="1.3" fill="#e8c8cc" opacity=".9"/><ellipse cx="23.2" cy="21.3" rx="1.9" ry="0.9" fill="#e4b4c4" opacity=".9"/><ellipse cx="62.2" cy="15.4" rx="0.9" ry="0.6" fill="#f2e2dc" opacity=".9"/><ellipse cx="73.1" cy="39.1" rx="3.6" ry="1.5" fill="#d8809e" opacity=".9"/><ellipse cx="13.9" cy="27.0" rx="2.6" ry="1.1" fill="#a89080" opacity=".9"/><ellipse cx="25.5" cy="42.4" rx="3.8" ry="1.7" fill="#d8809e" opacity=".9"/><ellipse cx="14.1" cy="28.1" rx="2.1" ry="1.0" fill="#e4b4c4" opacity=".9"/><ellipse cx="28.5" cy="46.1" rx="4.5" ry="2.0" fill="#c46690" opacity=".9"/><ellipse cx="67.0" cy="28.2" rx="1.8" ry="1.0" fill="#f2e2dc" opacity=".9"/><ellipse cx="22.2" cy="14.7" rx="1.2" ry="0.5" fill="#d8809e" opacity=".9"/><ellipse cx="26.8" cy="34.2" rx="2.8" ry="1.3" fill="#7d8a4c" opacity=".9"/><ellipse cx="21.3" cy="44.8" rx="4.2" ry="1.6" fill="#f2e2dc" opacity=".9"/><ellipse cx="29.3" cy="17.7" rx="1.3" ry="0.5" fill="#a89080" opacity=".9"/><ellipse cx="45.8" cy="17.6" rx="1.0" ry="0.7" fill="#c8507e" opacity=".9"/><ellipse cx="50.2" cy="24.3" rx="2.2" ry="0.7" fill="#7d8a4c" opacity=".9"/><ellipse cx="14.5" cy="41.9" rx="3.7" ry="1.7" fill="#e4b4c4" opacity=".9"/><ellipse cx="22.2" cy="36.2" rx="3.0" ry="1.4" fill="#80604a" opacity=".9"/><ellipse cx="75.6" cy="39.8" rx="2.5" ry="1.2" fill="#7d8a4c" opacity=".9"/><ellipse cx="85.5" cy="45.6" rx="3.9" ry="1.5" fill="#e4b4c4" opacity=".9"/><ellipse cx="59.7" cy="44.5" rx="2.7" ry="1.4" fill="#a89080" opacity=".9"/><ellipse cx="42.0" cy="18.9" rx="1.3" ry="0.6" fill="#e8c8cc" opacity=".9"/><ellipse cx="35.3" cy="28.3" rx="2.4" ry="0.8" fill="#e4b4c4" opacity=".9"/><ellipse cx="18.2" cy="18.7" rx="1.3" ry="0.8" fill="#f2e2dc" opacity=".9"/><ellipse cx="60.3" cy="45.1" rx="3.2" ry="1.8" fill="#c46690" opacity=".9"/><ellipse cx="15.5" cy="45.1" rx="2.9" ry="1.6" fill="#80604a" opacity=".9"/><ellipse cx="8.8" cy="14.0" rx="1.2" ry="0.5" fill="#d8809e" opacity=".9"/><ellipse cx="43.8" cy="45.0" rx="4.4" ry="1.8" fill="#e4b4c4" opacity=".9"/><ellipse cx="13.1" cy="40.4" rx="3.3" ry="1.3" fill="#c46690" opacity=".9"/><ellipse cx="62.2" cy="15.3" rx="0.7" ry="0.5" fill="#a89080" opacity=".9"/><ellipse cx="36.5" cy="38.2" rx="2.6" ry="1.4" fill="#c8507e" opacity=".9"/><ellipse cx="5.2" cy="15.0" rx="1.4" ry="0.5" fill="#7d8a4c" opacity=".9"/><ellipse cx="54.6" cy="20.6" rx="1.5" ry="0.7" fill="#80604a" opacity=".9"/><ellipse cx="38.2" cy="15.0" rx="1.1" ry="0.4" fill="#7d8a4c" opacity=".9"/><ellipse cx="19.5" cy="33.8" rx="2.7" ry="1.1" fill="#80604a" opacity=".9"/><ellipse cx="83.4" cy="38.6" rx="3.2" ry="1.4" fill="#e8c8cc" opacity=".9"/><ellipse cx="52.9" cy="25.9" rx="1.4" ry="0.7" fill="#e8c8cc" opacity=".9"/><ellipse cx="76.5" cy="33.5" rx="2.5" ry="1.0" fill="#a89080" opacity=".9"/><ellipse cx="52.8" cy="43.2" rx="2.7" ry="1.7" fill="#7d8a4c" opacity=".9"/><ellipse cx="2.7" cy="33.3" rx="3.1" ry="1.0" fill="#80604a" opacity=".9"/><ellipse cx="70.2" cy="45.2" rx="3.6" ry="1.4" fill="#7d8a4c" opacity=".9"/><ellipse cx="41.7" cy="16.3" rx="0.9" ry="0.5" fill="#d8809e" opacity=".9"/><ellipse cx="61.6" cy="24.1" rx="2.1" ry="0.7" fill="#e4b4c4" opacity=".9"/><ellipse cx="-1.8" cy="27.1" rx="2.2" ry="1.2" fill="#e8c8cc" opacity=".9"/><ellipse cx="16.4" cy="25.6" rx="2.3" ry="1.0" fill="#c8507e" opacity=".9"/><ellipse cx="16.3" cy="14.6" rx="1.3" ry="0.4" fill="#f2e2dc" opacity=".9"/><ellipse cx="82.9" cy="44.4" rx="2.5" ry="1.2" fill="#c8507e" opacity=".9"/><ellipse cx="45.6" cy="24.0" rx="1.3" ry="0.8" fill="#c46690" opacity=".9"/><ellipse cx="13.5" cy="24.8" rx="1.9" ry="0.9" fill="#f2e2dc" opacity=".9"/><ellipse cx="3.9" cy="36.5" rx="3.6" ry="1.5" fill="#c46690" opacity=".9"/><ellipse cx="45.6" cy="45.9" rx="3.2" ry="1.5" fill="#e8c8cc" opacity=".9"/><ellipse cx="8.9" cy="33.1" rx="2.7" ry="0.9" fill="#c8507e" opacity=".9"/><ellipse cx="23.1" cy="15.2" rx="1.3" ry="0.5" fill="#c46690" opacity=".9"/><ellipse cx="12.0" cy="45.8" rx="3.6" ry="1.5" fill="#80604a" opacity=".9"/><ellipse cx="13.7" cy="34.4" rx="3.4" ry="1.3" fill="#a89080" opacity=".9"/><ellipse cx="49.3" cy="15.5" rx="0.9" ry="0.5" fill="#f2e2dc" opacity=".9"/><ellipse cx="53.0" cy="33.3" rx="3.1" ry="1.0" fill="#a89080" opacity=".9"/><ellipse cx="86.1" cy="20.9" rx="1.6" ry="0.7" fill="#80604a" opacity=".9"/><ellipse cx="22.8" cy="34.3" rx="2.3" ry="1.4" fill="#7d8a4c" opacity=".9"/><ellipse cx="28.2" cy="40.3" rx="2.5" ry="1.2" fill="#f2e2dc" opacity=".9"/><ellipse cx="1.0" cy="46.8" rx="2.7" ry="2.0" fill="#e4b4c4" opacity=".9"/><ellipse cx="60.9" cy="43.0" rx="2.8" ry="1.4" fill="#7d8a4c" opacity=".9"/><ellipse cx="34.2" cy="45.9" rx="3.8" ry="2.0" fill="#f2e2dc" opacity=".9"/><ellipse cx="44.7" cy="28.5" rx="2.5" ry="0.8" fill="#80604a" opacity=".9"/><ellipse cx="-1.6" cy="14.8" rx="1.1" ry="0.6" fill="#7d8a4c" opacity=".9"/><ellipse cx="87.7" cy="33.3" rx="2.5" ry="1.3" fill="#80604a" opacity=".9"/><ellipse cx="29.9" cy="18.4" rx="1.5" ry="0.6" fill="#c8507e" opacity=".9"/><ellipse cx="84.2" cy="31.1" rx="2.4" ry="0.9" fill="#c46690" opacity=".9"/><ellipse cx="39.3" cy="19.5" rx="1.2" ry="0.5" fill="#e8c8cc" opacity=".9"/><ellipse cx="9.6" cy="23.0" rx="1.7" ry="0.8" fill="#a89080" opacity=".9"/><ellipse cx="35.5" cy="43.8" rx="3.7" ry="1.9" fill="#c46690" opacity=".9"/><ellipse cx="82.1" cy="28.1" rx="2.4" ry="0.9" fill="#c8507e" opacity=".9"/><ellipse cx="44.9" cy="26.7" rx="2.2" ry="0.9" fill="#c8507e" opacity=".9"/><ellipse cx="78.8" cy="38.1" rx="3.6" ry="1.2" fill="#7d8a4c" opacity=".9"/><ellipse cx="1.3" cy="24.4" rx="2.0" ry="1.0" fill="#f2e2dc" opacity=".9"/><ellipse cx="45.7" cy="22.0" rx="1.5" ry="0.8" fill="#c46690" opacity=".9"/><ellipse cx="43.5" cy="36.1" rx="3.3" ry="1.2" fill="#e4b4c4" opacity=".9"/><ellipse cx="79.2" cy="26.9" rx="1.6" ry="0.8" fill="#d8809e" opacity=".9"/><ellipse cx="47.8" cy="19.5" rx="1.6" ry="0.7" fill="#a89080" opacity=".9"/><ellipse cx="83.4" cy="46.1" rx="3.3" ry="1.7" fill="#a89080" opacity=".9"/><ellipse cx="70.4" cy="39.3" rx="3.4" ry="1.5" fill="#e4b4c4" opacity=".9"/><ellipse cx="55.2" cy="23.0" rx="2.0" ry="0.8" fill="#7d8a4c" opacity=".9"/><ellipse cx="40.3" cy="42.0" rx="2.6" ry="1.2" fill="#d8809e" opacity=".9"/><ellipse cx="29.3" cy="21.7" rx="1.9" ry="0.9" fill="#80604a" opacity=".9"/><ellipse cx="23.2" cy="32.9" rx="2.7" ry="0.9" fill="#e4b4c4" opacity=".9"/><ellipse cx="65.8" cy="18.7" rx="1.1" ry="0.7" fill="#f2e2dc" opacity=".9"/><ellipse cx="54.5" cy="16.8" rx="0.9" ry="0.6" fill="#7d8a4c" opacity=".9"/><ellipse cx="15.5" cy="30.7" rx="2.3" ry="1.0" fill="#e4b4c4" opacity=".9"/><ellipse cx="35.3" cy="22.9" rx="1.9" ry="0.9" fill="#7d8a4c" opacity=".9"/><ellipse cx="56.4" cy="25.7" rx="2.0" ry="0.8" fill="#c8507e" opacity=".9"/><ellipse cx="88.0" cy="17.7" rx="1.4" ry="0.5" fill="#e4b4c4" opacity=".9"/><ellipse cx="20.8" cy="20.6" rx="1.7" ry="0.7" fill="#a89080" opacity=".9"/><ellipse cx="67.8" cy="45.2" rx="4.2" ry="1.8" fill="#c8507e" opacity=".9"/><ellipse cx="62.8" cy="41.4" rx="3.2" ry="1.4" fill="#c46690" opacity=".9"/><ellipse cx="13.7" cy="36.9" rx="2.3" ry="1.3" fill="#e4b4c4" opacity=".9"/><ellipse cx="46.5" cy="42.6" rx="3.0" ry="1.6" fill="#a89080" opacity=".9"/><ellipse cx="56.9" cy="22.8" rx="1.7" ry="0.7" fill="#d8809e" opacity=".9"/><ellipse cx="28.6" cy="36.7" rx="3.3" ry="1.4" fill="#d8809e" opacity=".9"/><ellipse cx="45.2" cy="18.4" rx="1.6" ry="0.7" fill="#f2e2dc" opacity=".9"/><ellipse cx="33.9" cy="36.9" rx="2.2" ry="1.1" fill="#e8c8cc" opacity=".9"/><ellipse cx="49.7" cy="40.8" rx="3.2" ry="1.2" fill="#c8507e" opacity=".9"/><ellipse cx="5.4" cy="23.5" rx="2.0" ry="0.9" fill="#a89080" opacity=".9"/><ellipse cx="22.3" cy="14.0" rx="1.2" ry="0.4" fill="#f2e2dc" opacity=".9"/><ellipse cx="51.6" cy="40.9" rx="3.2" ry="1.3" fill="#d8809e" opacity=".9"/><ellipse cx="31.4" cy="17.4" rx="1.4" ry="0.6" fill="#7d8a4c" opacity=".9"/><ellipse cx="85.5" cy="38.4" rx="3.5" ry="1.3" fill="#f2e2dc" opacity=".9"/><ellipse cx="85.1" cy="23.5" rx="1.5" ry="0.6" fill="#7d8a4c" opacity=".9"/><ellipse cx="65.1" cy="21.9" rx="1.9" ry="0.7" fill="#a89080" opacity=".9"/><ellipse cx="72.9" cy="34.7" rx="2.5" ry="1.3" fill="#e8c8cc" opacity=".9"/><ellipse cx="89.0" cy="27.3" rx="2.3" ry="0.9" fill="#c8507e" opacity=".9"/><ellipse cx="8.3" cy="22.0" rx="1.9" ry="0.9" fill="#d8809e" opacity=".9"/><ellipse cx="44.3" cy="44.4" rx="3.8" ry="1.6" fill="#a89080" opacity=".9"/><ellipse cx="66.7" cy="23.8" rx="1.8" ry="0.8" fill="#c8507e" opacity=".9"/><ellipse cx="44.8" cy="19.6" rx="1.5" ry="0.6" fill="#7d8a4c" opacity=".9"/><ellipse cx="18.2" cy="14.7" rx="1.0" ry="0.4" fill="#f2e2dc" opacity=".9"/><ellipse cx="59.6" cy="30.0" rx="2.1" ry="1.0" fill="#d8809e" opacity=".9"/><ellipse cx="57.5" cy="21.6" rx="1.8" ry="0.7" fill="#e4b4c4" opacity=".9"/><ellipse cx="75.0" cy="39.0" rx="3.0" ry="1.2" fill="#e8c8cc" opacity=".9"/><ellipse cx="68.9" cy="39.9" rx="2.8" ry="1.5" fill="#7d8a4c" opacity=".9"/><ellipse cx="71.7" cy="28.1" rx="1.9" ry="0.9" fill="#f2e2dc" opacity=".9"/><ellipse cx="33.7" cy="33.1" rx="2.0" ry="1.1" fill="#7d8a4c" opacity=".9"/><ellipse cx="13.5" cy="21.9" rx="1.7" ry="0.7" fill="#a89080" opacity=".9"/><ellipse cx="71.2" cy="33.2" rx="2.0" ry="1.2" fill="#7d8a4c" opacity=".9"/><ellipse cx="69.0" cy="31.6" rx="2.3" ry="1.2" fill="#c8507e" opacity=".9"/><path d="M62 16L58 48" stroke="#6a5040" stroke-width=".9" opacity=".5"/><path d="M67 16L66 48" stroke="#6a5040" stroke-width=".9" opacity=".5"/><path d="M72 16L74 48" stroke="#6a5040" stroke-width=".9" opacity=".5"/><path d="M77 16L82 48" stroke="#6a5040" stroke-width=".9" opacity=".5"/><path d="M82 16L90 48" stroke="#6a5040" stroke-width=".9" opacity=".5"/><path d="M87 16L98 48" stroke="#6a5040" stroke-width=".9" opacity=".5"/><path d="M-2 45l94 1v4h-94z" fill="#948070" opacity=".7"/></g><rect width="90" height="48" filter="url(#tn13)" opacity="0.1"/></g></svg>
<svg style="left:543px;top:325px;" width="93" height="51" viewBox="0 0 93 51"><defs><clipPath id="tc14"><rect x="1" y="1" width="88" height="46" rx="3.500"/></clipPath><filter id="tb14" x="-5%" y="-5%" width="110%" height="110%"><feGaussianBlur stdDeviation="0.45"/></filter><filter id="tn14" x="0" y="0" width="100%" height="100%"><feTurbulence type="fractalNoise" baseFrequency=".45" numOctaves="2" seed="15"/><feColorMatrix type="matrix" values="0 0 0 0 0  0 0 0 0 0  0 0 0 0 0  0 0 0 1.400 -.5"/></filter><linearGradient id="h7g" x1="0" y1="0" x2="0" y2="1"><stop offset="0" stop-color="#a4ca84"/><stop offset=".25" stop-color="#8cbc6a"/><stop offset="1" stop-color="#68a24e"/></linearGradient></defs><rect x="1.500" y="1.500" width="90" height="48" fill="#000" opacity=".18"/><rect x="1" y="1" width="90" height="48" fill="#000" opacity=".14"/><rect width="90" height="48" fill="#050505"/><g clip-path="url(#tc14)"><g filter="url(#tb14)"><rect x="-4" y="-4" width="98" height="56" fill="url(#h7g)"/><path d="M34.0 9L-70.0 50" stroke="#4a8638" stroke-width=".9" opacity=".5" stroke-dasharray="1.400 .8"/><path d="M35.9 9L-63.0 50" stroke="#4a8638" stroke-width=".9" opacity=".5" stroke-dasharray="1.400 .8"/><path d="M37.8 9L-56.0 50" stroke="#4a8638" stroke-width=".9" opacity=".5" stroke-dasharray="1.400 .8"/><path d="M39.7 9L-49.0 50" stroke="#4a8638" stroke-width=".9" opacity=".5" stroke-dasharray="1.400 .8"/><path d="M41.6 9L-42.0 50" stroke="#4a8638" stroke-width=".9" opacity=".5" stroke-dasharray="1.400 .8"/><path d="M43.5 9L-35.0 50" stroke="#4a8638" stroke-width=".9" opacity=".5" stroke-dasharray="1.400 .8"/><path d="M45.4 9L-28.0 50" stroke="#4a8638" stroke-width=".9" opacity=".5" stroke-dasharray="1.400 .8"/><path d="M47.3 9L-21.0 50" stroke="#4a8638" stroke-width=".9" opacity=".5" stroke-dasharray="1.400 .8"/><path d="M49.2 9L-14.0 50" stroke="#4a8638" stroke-width=".9" opacity=".5" stroke-dasharray="1.400 .8"/><path d="M51.1 9L-7.0 50" stroke="#4a8638" stroke-width=".9" opacity=".5" stroke-dasharray="1.400 .8"/><path d="M53.0 9L0.0 50" stroke="#4a8638" stroke-width=".9" opacity=".5" stroke-dasharray="1.400 .8"/><path d="M54.9 9L7.0 50" stroke="#4a8638" stroke-width=".9" opacity=".5" stroke-dasharray="1.400 .8"/><path d="M56.8 9L14.0 50" stroke="#4a8638" stroke-width=".9" opacity=".5" stroke-dasharray="1.400 .8"/><path d="M58.7 9L21.0 50" stroke="#4a8638" stroke-width=".9" opacity=".5" stroke-dasharray="1.400 .8"/><path d="M60.6 9L28.0 50" stroke="#4a8638" stroke-width=".9" opacity=".5" stroke-dasharray="1.400 .8"/><path d="M62.5 9L35.0 50" stroke="#4a8638" stroke-width=".9" opacity=".5" stroke-dasharray="1.400 .8"/><path d="M64.4 9L42.0 50" stroke="#4a8638" stroke-width=".9" opacity=".5" stroke-dasharray="1.400 .8"/><path d="M66.3 9L49.0 50" stroke="#4a8638" stroke-width=".9" opacity=".5" stroke-dasharray="1.400 .8"/><path d="M68.2 9L56.0 50" stroke="#4a8638" stroke-width=".9" opacity=".5" stroke-dasharray="1.400 .8"/><path d="M70.1 9L63.0 50" stroke="#4a8638" stroke-width=".9" opacity=".5" stroke-dasharray="1.400 .8"/><path d="M72.0 9L70.0 50" stroke="#4a8638" stroke-width=".9" opacity=".5" stroke-dasharray="1.400 .8"/><path d="M73.9 9L77.0 50" stroke="#4a8638" stroke-width=".9" opacity=".5" stroke-dasharray="1.400 .8"/><path d="M75.8 9L84.0 50" stroke="#4a8638" stroke-width=".9" opacity=".5" stroke-dasharray="1.400 .8"/><path d="M77.7 9L91.0 50" stroke="#4a8638" stroke-width=".9" opacity=".5" stroke-dasharray="1.400 .8"/><path d="M79.6 9L98.0 50" stroke="#4a8638" stroke-width=".9" opacity=".5" stroke-dasharray="1.400 .8"/><path d="M81.5 9L105.0 50" stroke="#4a8638" stroke-width=".9" opacity=".5" stroke-dasharray="1.400 .8"/><path d="M83.4 9L112.0 50" stroke="#4a8638" stroke-width=".9" opacity=".5" stroke-dasharray="1.400 .8"/><path d="M85.3 9L119.0 50" stroke="#4a8638" stroke-width=".9" opacity=".5" stroke-dasharray="1.400 .8"/><path d="M87.2 9L126.0 50" stroke="#4a8638" stroke-width=".9" opacity=".5" stroke-dasharray="1.400 .8"/><path d="M89.1 9L133.0 50" stroke="#4a8638" stroke-width=".9" opacity=".5" stroke-dasharray="1.400 .8"/><path d="M91.0 9L140.0 50" stroke="#4a8638" stroke-width=".9" opacity=".5" stroke-dasharray="1.400 .8"/><path d="M92.9 9L147.0 50" stroke="#4a8638" stroke-width=".9" opacity=".5" stroke-dasharray="1.400 .8"/><path d="M94.8 9L154.0 50" stroke="#4a8638" stroke-width=".9" opacity=".5" stroke-dasharray="1.400 .8"/><path d="M96.7 9L161.0 50" stroke="#4a8638" stroke-width=".9" opacity=".5" stroke-dasharray="1.400 .8"/><ellipse cx="20" cy="7.500" rx="6.500" ry="3.800" fill="#4a7c3c"/><ellipse cx="18" cy="6.500" rx="3" ry="2" fill="#5c8e4a"/><path d="M9 10.500h22" stroke="#5c8a4a" stroke-width=".8"/></g><rect width="90" height="48" filter="url(#tn14)" opacity="0.06"/></g></svg></div></div>
<div style="left:8px;top:396px;width:667px;height:75px;background:#f0f0f0;"></div>
<span class="t" style="left:138.50px;top:411.00px;font-size:12px;color:#000;font-family:'Liberation Sans',sans-serif;letter-spacing:-0.292px;">File name:</span>
<div style="left:197px;top:405px;width:261px;height:24px;background:#fff;border:1px solid #0078d7;"></div>
<div style="left:201px;top:409px;width:1px;height:16px;background:#000;"></div>
<svg style="left:444.5px;top:414.5px;" width="9" height="6" viewBox="0 0 9 6"><path d="M.5 .5l4 4.300 4-4.300" fill="none" stroke="#444" stroke-width="1"/></svg>
<div style="left:470px;top:405px;width:188px;height:23px;background:#e1e1e1;border:1px solid #adadad;"></div>
<span class="t" style="left:474.30px;top:411.00px;font-size:12px;color:#000;font-family:'Liberation Sans',sans-serif;letter-spacing:-0.278px;">All Files</span>
<svg style="left:644.5px;top:414.5px;" width="9" height="6" viewBox="0 0 9 6"><path d="M.5 .5l4 4.300 4-4.300" fill="none" stroke="#444" stroke-width="1"/></svg>
<div style="left:471px;top:435.5px;width:86px;height:23px;background:#e1e1e1;border:2px solid #0078d7;"></div>
<span class="t" style="left:499.75px;top:441.00px;font-size:12px;color:#000;font-family:'Liberation Sans',sans-serif;letter-spacing:-0.314px;">Open</span>
<div style="left:571px;top:435.5px;width:86px;height:23px;background:#e1e1e1;border:1px solid #adadad;"></div>
<span class="t" style="left:596.25px;top:441.00px;font-size:12px;color:#000;font-family:'Liberation Sans',sans-serif;letter-spacing:-0.309px;">Cancel</span>
<svg style="left:664.5px;top:462.5px;" width="8" height="8" viewBox="0 0 8 8"><rect x="6" y="0" width="1.500" height="1.500" fill="#b0b0b0"/><rect x="3" y="3" width="1.500" height="1.500" fill="#b0b0b0"/><rect x="6" y="3" width="1.500" height="1.500" fill="#b0b0b0"/><rect x="0" y="6" width="1.500" height="1.500" fill="#b0b0b0"/><rect x="3" y="6" width="1.500" height="1.500" fill="#b0b0b0"/><rect x="6" y="6" width="1.500" height="1.500" fill="#b0b0b0"/></svg>
<div style="left:588px;top:358px;width:129px;height:49.5px;background:#fff;border:1px solid #767676;box-shadow:2px 2px 3px rgba(0,0,0,.35);"></div>
<span class="t" style="left:594.40px;top:362.00px;font-size:12px;color:#575757;font-family:'Liberation Sans',sans-serif;letter-spacing:-0.344px;">Item type: JPG File</span>
<span class="t" style="left:594.40px;top:377.00px;font-size:12px;color:#575757;font-family:'Liberation Sans',sans-serif;letter-spacing:-0.313px;">Dimensions: 562 x 298</span>
<span class="t" style="left:594.40px;top:392.00px;font-size:12px;color:#575757;font-family:'Liberation Sans',sans-serif;letter-spacing:-0.708px;">Size: 88.1 KB</span>
<svg style="left:570.6px;top:352.4px;" width="14" height="21" viewBox="0 0 14 21"><path d="M.7 .7v16.300l3.700-3.600 2.400 5.600 2.300-1-2.400-5.500h5.200z" fill="#fff" stroke="#000" stroke-width="1" stroke-linejoin="miter"/></svg>
<svg style="left:683.6px;top:361.2px;" width="14" height="21" viewBox="0 0 14 21"><path d="M.7 .7v16.300l3.700-3.600 2.400 5.600 2.300-1-2.400-5.500h5.200z" fill="#fff" stroke="#000" stroke-width="1" stroke-linejoin="miter"/></svg>
</div></body></html>
